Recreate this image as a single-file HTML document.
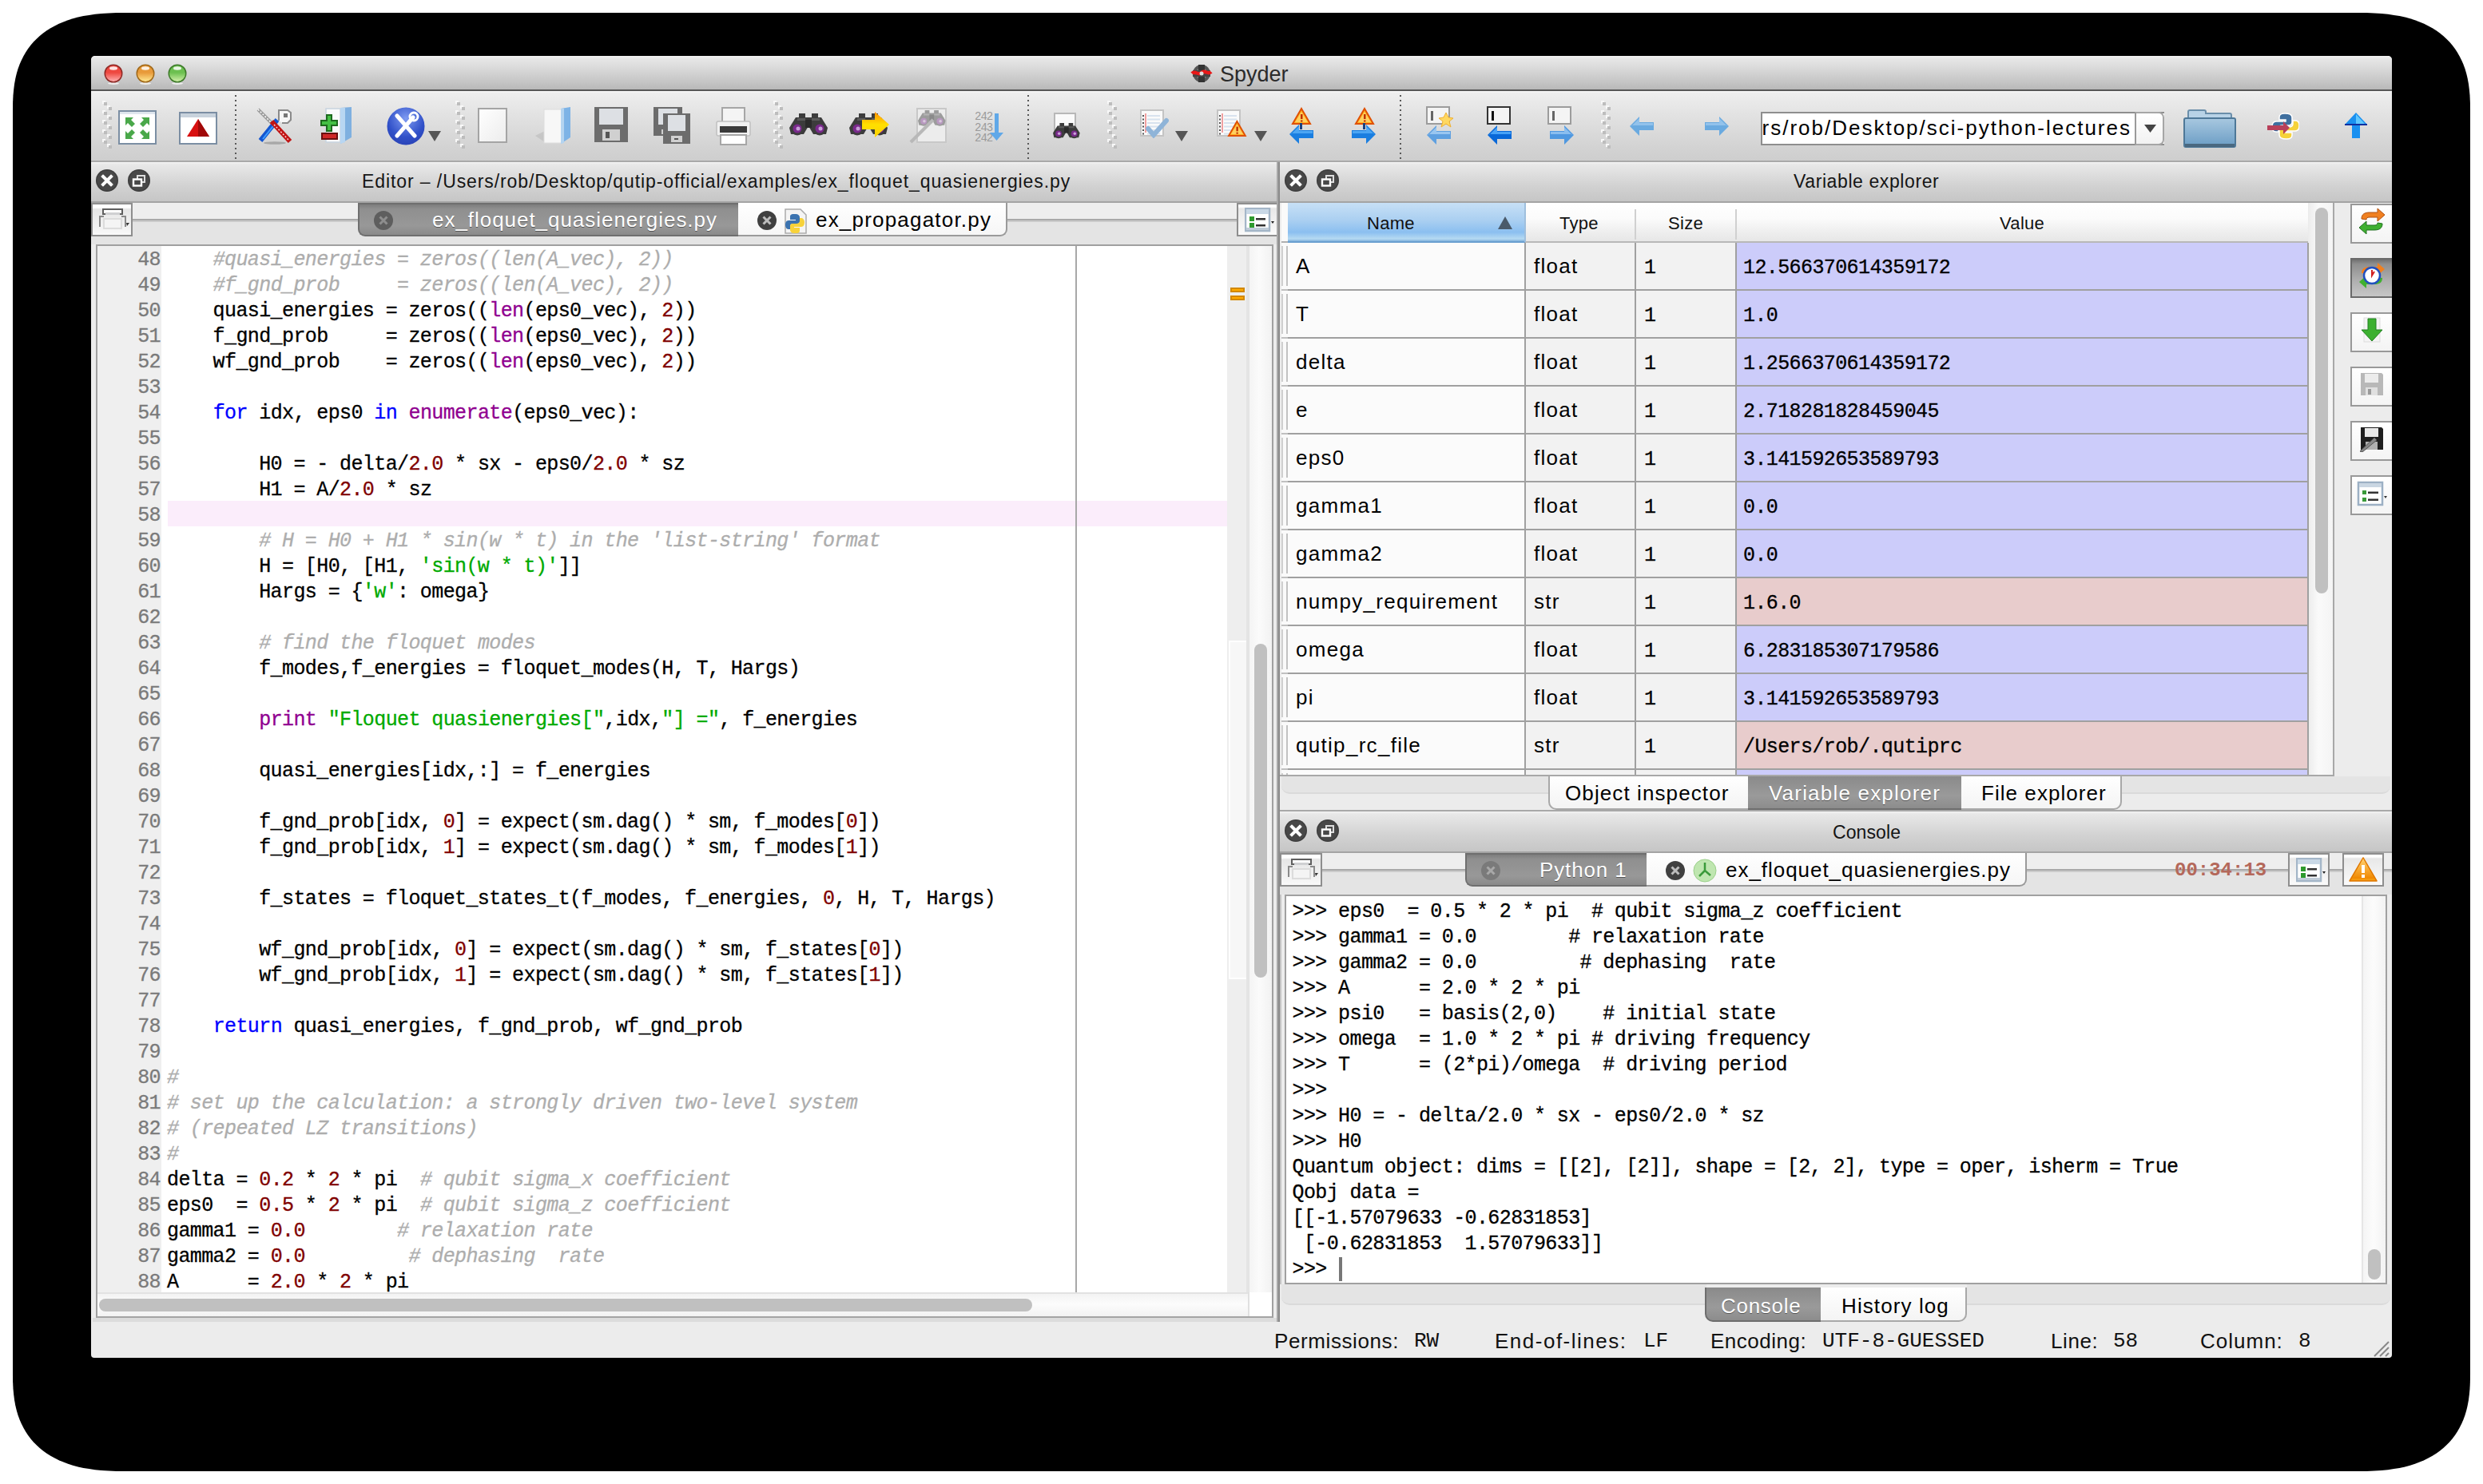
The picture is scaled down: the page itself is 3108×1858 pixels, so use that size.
<!DOCTYPE html><html><head><meta charset="utf-8"><style>html,body{margin:0;padding:0;width:3108px;height:1858px;overflow:hidden;background:#fff;}
*{box-sizing:border-box;}
body{font-family:"Liberation Sans",sans-serif;position:relative;color:#000;}
.a{position:absolute;}
.m{font-family:"Liberation Mono",monospace;font-size:25px;line-height:32px;letter-spacing:-0.6px;-webkit-text-stroke:0.3px currentColor;}
.ui{font-family:"Liberation Sans",sans-serif;font-size:26px;letter-spacing:1px;}
.hdr{background:linear-gradient(#f4f4f4 0,#e8e8e8 3px,#d2d2d2 60%,#c6c6c6);}
.cbx{position:absolute;width:28px;height:28px;border-radius:50%;background:radial-gradient(circle at 50% 40%,#5a5a5a,#333 75%);}
</style></head><body>
<svg class="a" style="left:0;top:0" width="3108" height="1858"><path d="M2948.0,16.0 L2962.2,16.1 L2972.1,16.5 L2980.9,17.0 L2989.0,17.8 L2996.5,18.9 L3003.6,20.1 L3010.4,21.6 L3016.8,23.3 L3022.9,25.3 L3028.7,27.4 L3034.3,29.8 L3039.6,32.4 L3044.7,35.2 L3049.5,38.3 L3054.0,41.5 L3058.3,45.0 L3062.3,48.7 L3066.1,52.6 L3069.7,56.8 L3072.9,61.1 L3076.0,65.7 L3078.7,70.5 L3081.2,75.5 L3083.5,80.8 L3085.5,86.3 L3087.2,92.1 L3088.7,98.2 L3089.9,104.7 L3090.8,111.7 L3091.5,119.2 L3091.9,127.8 L3092.0,140.0 L3092.0,1718.0 L3091.9,1730.2 L3091.5,1738.8 L3090.8,1746.3 L3089.9,1753.3 L3088.7,1759.8 L3087.2,1765.9 L3085.5,1771.7 L3083.5,1777.2 L3081.2,1782.5 L3078.7,1787.5 L3076.0,1792.3 L3072.9,1796.9 L3069.7,1801.2 L3066.1,1805.4 L3062.3,1809.3 L3058.3,1813.0 L3054.0,1816.5 L3049.5,1819.7 L3044.7,1822.8 L3039.6,1825.6 L3034.3,1828.2 L3028.7,1830.6 L3022.9,1832.7 L3016.8,1834.7 L3010.4,1836.4 L3003.6,1837.9 L2996.5,1839.1 L2989.0,1840.2 L2980.9,1841.0 L2972.1,1841.5 L2962.2,1841.9 L2948.0,1842.0 L160.0,1842.0 L145.8,1841.9 L135.9,1841.5 L127.1,1841.0 L119.0,1840.2 L111.5,1839.1 L104.4,1837.9 L97.6,1836.4 L91.2,1834.7 L85.1,1832.7 L79.3,1830.6 L73.7,1828.2 L68.4,1825.6 L63.3,1822.8 L58.5,1819.7 L54.0,1816.5 L49.7,1813.0 L45.7,1809.3 L41.9,1805.4 L38.3,1801.2 L35.1,1796.9 L32.0,1792.3 L29.3,1787.5 L26.8,1782.5 L24.5,1777.2 L22.5,1771.7 L20.8,1765.9 L19.3,1759.8 L18.1,1753.3 L17.2,1746.3 L16.5,1738.8 L16.1,1730.2 L16.0,1718.0 L16.0,140.0 L16.1,127.8 L16.5,119.2 L17.2,111.7 L18.1,104.7 L19.3,98.2 L20.8,92.1 L22.5,86.3 L24.5,80.8 L26.8,75.5 L29.3,70.5 L32.0,65.7 L35.1,61.1 L38.3,56.8 L41.9,52.6 L45.7,48.7 L49.7,45.0 L54.0,41.5 L58.5,38.3 L63.3,35.2 L68.4,32.4 L73.7,29.8 L79.3,27.4 L85.1,25.3 L91.2,23.3 L97.6,21.6 L104.4,20.1 L111.5,18.9 L119.0,17.8 L127.1,17.0 L135.9,16.5 L145.8,16.1 L160.0,16.0Z" fill="#000"/></svg>
<div class="a " style="left:114px;top:70px;width:2880px;height:1630px;background:#ececec;border-radius:5px 5px 4px 4px;"></div>
<div class="a " style="left:114px;top:70px;width:2880px;height:42px;background:linear-gradient(#f2f2f2 0,#e6e6e6 4px,#d8d8d8 40%,#c4c4c4 80%,#b8b8b8);border-radius:5px 5px 0 0;"></div>
<div class="a " style="left:114px;top:112px;width:2880px;height:2px;background:#575757;"></div>
<svg class="a" style="left:130px;top:80px" width="24" height="26"><defs><linearGradient id="tl0" x1="0" y1="0" x2="0" y2="1"><stop offset="0" stop-color="#ee4840"/><stop offset=".45" stop-color="#ee4840"/><stop offset="1" stop-color="#ffb0b0"/></linearGradient></defs><ellipse cx="12" cy="24.5" rx="7" ry="1.5" fill="#fff" opacity=".7"/><circle cx="12" cy="12" r="11.5" fill="#8e2a26"/><circle cx="12" cy="12" r="10" fill="url(#tl0)"/><ellipse cx="12" cy="5.5" rx="5" ry="2.2" fill="#fff" opacity=".85"/></svg>
<svg class="a" style="left:170px;top:80px" width="24" height="26"><defs><linearGradient id="tl1" x1="0" y1="0" x2="0" y2="1"><stop offset="0" stop-color="#e89a3a"/><stop offset=".45" stop-color="#e89a3a"/><stop offset="1" stop-color="#ffe890"/></linearGradient></defs><ellipse cx="12" cy="24.5" rx="7" ry="1.5" fill="#fff" opacity=".7"/><circle cx="12" cy="12" r="11.5" fill="#a06818"/><circle cx="12" cy="12" r="10" fill="url(#tl1)"/><ellipse cx="12" cy="5.5" rx="5" ry="2.2" fill="#fff" opacity=".85"/></svg>
<svg class="a" style="left:210px;top:80px" width="24" height="26"><defs><linearGradient id="tl2" x1="0" y1="0" x2="0" y2="1"><stop offset="0" stop-color="#6cc050"/><stop offset=".45" stop-color="#6cc050"/><stop offset="1" stop-color="#d0f0a8"/></linearGradient></defs><ellipse cx="12" cy="24.5" rx="7" ry="1.5" fill="#fff" opacity=".7"/><circle cx="12" cy="12" r="11.5" fill="#3e7a2a"/><circle cx="12" cy="12" r="10" fill="url(#tl2)"/><ellipse cx="12" cy="5.5" rx="5" ry="2.2" fill="#fff" opacity=".85"/></svg>
<svg class="a" style="left:1490px;top:79px" width="28" height="26"><circle cx="14" cy="13" r="11" fill="#555"/><circle cx="14" cy="13" r="7" fill="#888"/><rect x="10" y="2" width="8" height="22" fill="#333"/><rect x="3" y="9" width="22" height="8" fill="#444"/><path d="M2,13 C6,9 10,16 14,12 C18,8 22,15 26,11" stroke="#e81818" stroke-width="4.5" fill="none"/><circle cx="14" cy="13" r="2.5" fill="#ddd"/></svg>
<div class="a" style="left:1527px;top:77.6px;white-space:pre;font-size:27px;line-height:30.16px;letter-spacing:0px;color:#2b2b2b;">Spyder</div>
<div class="a " style="left:114px;top:114px;width:2880px;height:87px;background:linear-gradient(#efefef,#e2e2e2 35%,#d3d3d3 80%,#cecece);"></div>
<div class="a " style="left:114px;top:114px;width:2880px;height:2px;background:#f4f4f4;"></div>
<div class="a " style="left:114px;top:201px;width:2880px;height:2px;background:#a9a9a9;"></div>
<svg class="a" style="left:128px;top:118px" width="14" height="72" viewBox="0 0 14 72"><rect x="0" y="8" width="4" height="2" fill="#f8f8f8"/><rect x="0" y="10" width="2" height="2" fill="#f8f8f8"/><rect x="2" y="10" width="4" height="4" fill="#bdbdbd"/><rect x="6" y="14" width="4" height="2" fill="#f8f8f8"/><rect x="6" y="16" width="2" height="2" fill="#f8f8f8"/><rect x="8" y="16" width="4" height="4" fill="#bdbdbd"/><rect x="0" y="20" width="4" height="2" fill="#f8f8f8"/><rect x="0" y="22" width="2" height="2" fill="#f8f8f8"/><rect x="2" y="22" width="4" height="4" fill="#bdbdbd"/><rect x="6" y="26" width="4" height="2" fill="#f8f8f8"/><rect x="6" y="28" width="2" height="2" fill="#f8f8f8"/><rect x="8" y="28" width="4" height="4" fill="#bdbdbd"/><rect x="0" y="32" width="4" height="2" fill="#f8f8f8"/><rect x="0" y="34" width="2" height="2" fill="#f8f8f8"/><rect x="2" y="34" width="4" height="4" fill="#bdbdbd"/><rect x="6" y="38" width="4" height="2" fill="#f8f8f8"/><rect x="6" y="40" width="2" height="2" fill="#f8f8f8"/><rect x="8" y="40" width="4" height="4" fill="#bdbdbd"/><rect x="0" y="44" width="4" height="2" fill="#f8f8f8"/><rect x="0" y="46" width="2" height="2" fill="#f8f8f8"/><rect x="2" y="46" width="4" height="4" fill="#bdbdbd"/><rect x="6" y="50" width="4" height="2" fill="#f8f8f8"/><rect x="6" y="52" width="2" height="2" fill="#f8f8f8"/><rect x="8" y="52" width="4" height="4" fill="#bdbdbd"/><rect x="0" y="56" width="4" height="2" fill="#f8f8f8"/><rect x="0" y="58" width="2" height="2" fill="#f8f8f8"/><rect x="2" y="58" width="4" height="4" fill="#bdbdbd"/><rect x="6" y="62" width="4" height="2" fill="#f8f8f8"/><rect x="6" y="64" width="2" height="2" fill="#f8f8f8"/><rect x="8" y="64" width="4" height="4" fill="#bdbdbd"/></svg>
<svg class="a" style="left:148px;top:138px" width="48" height="43" viewBox="0 0 48 43"><rect x="1" y="1" width="46" height="41" fill="#fff" stroke="#7b8ea3" stroke-width="2"/><rect x="2" y="2" width="44" height="3" fill="#dfe6ee"/><g fill="#4aa84a"><path d="M9,9 H19 L16,12 L21,17 L17,21 L12,16 L9,19Z"/><path d="M39,9 H29 L32,12 L27,17 L31,21 L36,16 L39,19Z"/><path d="M9,36 H19 L16,33 L21,28 L17,24 L12,29 L9,26Z"/><path d="M39,36 H29 L32,33 L27,28 L31,24 L36,29 L39,26Z"/></g></svg>
<svg class="a" style="left:224px;top:140px" width="48" height="41" viewBox="0 0 48 41"><rect x="1" y="1" width="46" height="39" fill="#fff" stroke="#7b8ea3" stroke-width="2"/><rect x="2" y="2" width="44" height="5" fill="#c8d2dc"/><path d="M24,9 L38,31 H10Z" fill="#d81010"/><path d="M24,9 L38,31 H24Z" fill="#a00808"/></svg>
<svg class="a" style="left:294px;top:118px" width="2" height="84" viewBox="0 0 2 84"><rect x="0" y="1" width="2" height="2" fill="#585858"/><rect x="0" y="7" width="2" height="2" fill="#585858"/><rect x="0" y="13" width="2" height="2" fill="#585858"/><rect x="0" y="19" width="2" height="2" fill="#585858"/><rect x="0" y="25" width="2" height="2" fill="#585858"/><rect x="0" y="31" width="2" height="2" fill="#585858"/><rect x="0" y="37" width="2" height="2" fill="#585858"/><rect x="0" y="43" width="2" height="2" fill="#585858"/><rect x="0" y="49" width="2" height="2" fill="#585858"/><rect x="0" y="55" width="2" height="2" fill="#585858"/><rect x="0" y="61" width="2" height="2" fill="#585858"/><rect x="0" y="67" width="2" height="2" fill="#585858"/><rect x="0" y="73" width="2" height="2" fill="#585858"/><rect x="0" y="79" width="2" height="2" fill="#585858"/></svg>
<svg class="a" style="left:320px;top:134px" width="48" height="48" viewBox="0 0 48 48"><ellipse cx="24" cy="45" rx="14" ry="1.8" fill="#8a8a8a" opacity=".6"/><path d="M3,3 L20,20" stroke="#9a9a9a" stroke-width="4"/><path d="M3,3 L20,20" stroke="#fff" stroke-width="1.5" stroke-dasharray="2 2"/><path d="M27,16 L6,42" stroke="#1456d0" stroke-width="6"/><path d="M25,20 L9,40" stroke="#40a0ff" stroke-width="2"/><path d="M20,18 L43,43" stroke="#c01414" stroke-width="6"/><path d="M23,22 L41,41" stroke="#ffd0d0" stroke-width="1.5" stroke-dasharray="2 2"/><path d="M29,17 V4 H40 L44,7 V16 L40,20 H33" fill="#f6f6f6" stroke="#8a8a8a" stroke-width="2"/><path d="M35,8 H40 V13 H35Z" fill="#777"/></svg>
<svg class="a" style="left:400px;top:134px" width="42" height="48" viewBox="0 0 42 48"><path d="M8,2 H26 V44 H8Z" fill="#fbfbfb" stroke="#c8d4e0" stroke-width="1.5"/><path d="M26,1 L40,0 V38 L26,46Z" fill="#7fb0e0"/><path d="M26,1 L32,1 V44 L26,46Z" fill="#b8d6f2"/><path d="M9,10 H16 V3 H22 V10 H29 V16 H22 V23 H16 V16 H9Z" fill="#44c044" stroke="#1e6a1e" stroke-width="2" transform="translate(-7,7)"/><rect x="3" y="33" width="19" height="7" fill="#d02828" stroke="#6a1010" stroke-width="2"/></svg>
<svg class="a" style="left:484px;top:134px" width="48" height="48" viewBox="0 0 48 48"><defs><radialGradient id="bc" cx=".5" cy=".3" r=".7"><stop offset="0" stop-color="#7f9bf2"/><stop offset=".7" stop-color="#3050c8"/><stop offset="1" stop-color="#2a44b8"/></radialGradient></defs><circle cx="24" cy="24" r="23.5" fill="url(#bc)"/><path d="M13,11 L35,36 M13,36 L33,13" stroke="#fff" stroke-width="5" stroke-linecap="round"/><circle cx="34" cy="12" r="5" fill="none" stroke="#fff" stroke-width="3"/></svg>
<svg class="a" style="left:535px;top:162px" width="18" height="16" viewBox="0 0 18 16"><path d="M1,2 H17 L9,15Z" fill="#555"/></svg>
<svg class="a" style="left:570px;top:118px" width="14" height="72" viewBox="0 0 14 72"><rect x="0" y="8" width="4" height="2" fill="#f8f8f8"/><rect x="0" y="10" width="2" height="2" fill="#f8f8f8"/><rect x="2" y="10" width="4" height="4" fill="#bdbdbd"/><rect x="6" y="14" width="4" height="2" fill="#f8f8f8"/><rect x="6" y="16" width="2" height="2" fill="#f8f8f8"/><rect x="8" y="16" width="4" height="4" fill="#bdbdbd"/><rect x="0" y="20" width="4" height="2" fill="#f8f8f8"/><rect x="0" y="22" width="2" height="2" fill="#f8f8f8"/><rect x="2" y="22" width="4" height="4" fill="#bdbdbd"/><rect x="6" y="26" width="4" height="2" fill="#f8f8f8"/><rect x="6" y="28" width="2" height="2" fill="#f8f8f8"/><rect x="8" y="28" width="4" height="4" fill="#bdbdbd"/><rect x="0" y="32" width="4" height="2" fill="#f8f8f8"/><rect x="0" y="34" width="2" height="2" fill="#f8f8f8"/><rect x="2" y="34" width="4" height="4" fill="#bdbdbd"/><rect x="6" y="38" width="4" height="2" fill="#f8f8f8"/><rect x="6" y="40" width="2" height="2" fill="#f8f8f8"/><rect x="8" y="40" width="4" height="4" fill="#bdbdbd"/><rect x="0" y="44" width="4" height="2" fill="#f8f8f8"/><rect x="0" y="46" width="2" height="2" fill="#f8f8f8"/><rect x="2" y="46" width="4" height="4" fill="#bdbdbd"/><rect x="6" y="50" width="4" height="2" fill="#f8f8f8"/><rect x="6" y="52" width="2" height="2" fill="#f8f8f8"/><rect x="8" y="52" width="4" height="4" fill="#bdbdbd"/><rect x="0" y="56" width="4" height="2" fill="#f8f8f8"/><rect x="0" y="58" width="2" height="2" fill="#f8f8f8"/><rect x="2" y="58" width="4" height="4" fill="#bdbdbd"/><rect x="6" y="62" width="4" height="2" fill="#f8f8f8"/><rect x="6" y="64" width="2" height="2" fill="#f8f8f8"/><rect x="8" y="64" width="4" height="4" fill="#bdbdbd"/></svg>
<svg class="a" style="left:598px;top:135px" width="37" height="44" viewBox="0 0 37 44"><defs><linearGradient id="nf" x1="0" y1="0" x2="1" y2="1"><stop offset="0" stop-color="#fff"/><stop offset="1" stop-color="#ececec"/></linearGradient></defs><rect x="1" y="1" width="35" height="42" fill="url(#nf)" stroke="#a4a4a4" stroke-width="2"/></svg>
<svg class="a" style="left:664px;top:134px" width="52" height="48" viewBox="0 0 52 48"><path d="M6,36 L18,44 V30Z" fill="#bbb" opacity=".6"/><rect x="17" y="3" width="22" height="42" fill="#f7f7f7" stroke="#ddd" stroke-width="1"/><path d="M38,2 L50,0 V38 L38,46Z" fill="#7db3e6"/><path d="M38,2 L42,2 V45 L38,46Z" fill="#b4d4f0"/></svg>
<svg class="a" style="left:744px;top:134px" width="42" height="44" viewBox="0 0 42 44"><g transform="translate(0,0)"><path d="M0,0 H42 V44 H0Z" fill="#6c6c6c"/><rect x="6" y="2" width="30" height="20" fill="#dde0e4"/><rect x="10" y="28" width="22" height="14" fill="#d0d0d0"/><rect x="14" y="31" width="5" height="8" fill="#555"/></g></svg>
<svg class="a" style="left:818px;top:134px" width="48" height="46" viewBox="0 0 48 46"><g transform="translate(0,0)"><path d="M0,0 H36 V36 H0Z" fill="#6c6c6c"/><rect x="6" y="2" width="24" height="20" fill="#dde0e4"/><rect x="10" y="28" width="16" height="6" fill="#d0d0d0"/><rect x="14" y="31" width="5" height="0" fill="#555"/></g><g transform="translate(12,8)"><path d="M0,0 H34 V38 H0Z" fill="#6c6c6c"/><rect x="6" y="2" width="22" height="20" fill="#dde0e4"/><rect x="10" y="28" width="14" height="8" fill="#d0d0d0"/><rect x="14" y="31" width="5" height="2" fill="#555"/></g></svg>
<svg class="a" style="left:896px;top:134px" width="44" height="48" viewBox="0 0 44 48"><rect x="8" y="1" width="28" height="22" fill="#f4f4f4" stroke="#a6a6a6" stroke-width="2"/><rect x="1" y="18" width="42" height="18" rx="2" fill="#f0f0f0" stroke="#c0c0c0" stroke-width="1.5"/><rect x="5" y="24" width="34" height="8" fill="#3a3a3a"/><rect x="6" y="35" width="32" height="12" fill="#fff" stroke="#a6a6a6" stroke-width="2"/></svg>
<svg class="a" style="left:968px;top:118px" width="14" height="72" viewBox="0 0 14 72"><rect x="0" y="8" width="4" height="2" fill="#f8f8f8"/><rect x="0" y="10" width="2" height="2" fill="#f8f8f8"/><rect x="2" y="10" width="4" height="4" fill="#bdbdbd"/><rect x="6" y="14" width="4" height="2" fill="#f8f8f8"/><rect x="6" y="16" width="2" height="2" fill="#f8f8f8"/><rect x="8" y="16" width="4" height="4" fill="#bdbdbd"/><rect x="0" y="20" width="4" height="2" fill="#f8f8f8"/><rect x="0" y="22" width="2" height="2" fill="#f8f8f8"/><rect x="2" y="22" width="4" height="4" fill="#bdbdbd"/><rect x="6" y="26" width="4" height="2" fill="#f8f8f8"/><rect x="6" y="28" width="2" height="2" fill="#f8f8f8"/><rect x="8" y="28" width="4" height="4" fill="#bdbdbd"/><rect x="0" y="32" width="4" height="2" fill="#f8f8f8"/><rect x="0" y="34" width="2" height="2" fill="#f8f8f8"/><rect x="2" y="34" width="4" height="4" fill="#bdbdbd"/><rect x="6" y="38" width="4" height="2" fill="#f8f8f8"/><rect x="6" y="40" width="2" height="2" fill="#f8f8f8"/><rect x="8" y="40" width="4" height="4" fill="#bdbdbd"/><rect x="0" y="44" width="4" height="2" fill="#f8f8f8"/><rect x="0" y="46" width="2" height="2" fill="#f8f8f8"/><rect x="2" y="46" width="4" height="4" fill="#bdbdbd"/><rect x="6" y="50" width="4" height="2" fill="#f8f8f8"/><rect x="6" y="52" width="2" height="2" fill="#f8f8f8"/><rect x="8" y="52" width="4" height="4" fill="#bdbdbd"/><rect x="0" y="56" width="4" height="2" fill="#f8f8f8"/><rect x="0" y="58" width="2" height="2" fill="#f8f8f8"/><rect x="2" y="58" width="4" height="4" fill="#bdbdbd"/><rect x="6" y="62" width="4" height="2" fill="#f8f8f8"/><rect x="6" y="64" width="2" height="2" fill="#f8f8f8"/><rect x="8" y="64" width="4" height="4" fill="#bdbdbd"/></svg>
<svg class="a" style="left:988px;top:140px" width="48" height="34" viewBox="0 0 48 34"><g transform="translate(0,2) scale(1)"><rect x="12" y="0" width="8" height="6" fill="#3c3c3c"/><rect x="28" y="0" width="8" height="6" fill="#3c3c3c"/><path d="M8,5 H24 L25,14 L18,26 H2 L0,18Z" fill="#3c3c3c"/><path d="M24,5 H40 L48,18 L46,26 H30 L23,14Z" fill="#3c3c3c"/><rect x="10" y="6" width="10" height="3" fill="#5a5a5a"/><rect x="28" y="6" width="10" height="3" fill="#5a5a5a"/><rect x="20" y="8" width="8" height="10" fill="#2a2a2a"/><circle cx="10" cy="19" r="8.5" fill="#3c3c3c"/><circle cx="38" cy="19" r="8.5" fill="#3c3c3c"/><circle cx="10" cy="19" r="5.5" fill="#7a2a8c"/><circle cx="38" cy="19" r="5.5" fill="#7a2a8c"/><circle cx="11" cy="19" r="2.5" fill="#c8a0d8"/><circle cx="39" cy="19" r="2.5" fill="#c8a0d8"/></g></svg>
<svg class="a" style="left:1063px;top:138px" width="50" height="36" viewBox="0 0 50 36"><defs><linearGradient id="ya" x1="0" y1="0" x2="0" y2="1"><stop offset="0" stop-color="#ff8c00"/><stop offset=".5" stop-color="#ffe000"/><stop offset="1" stop-color="#ffd000"/></linearGradient></defs><g transform="translate(0,4) scale(1)"><rect x="12" y="0" width="8" height="6" fill="#3c3c3c"/><rect x="28" y="0" width="8" height="6" fill="#3c3c3c"/><path d="M8,5 H24 L25,14 L18,26 H2 L0,18Z" fill="#3c3c3c"/><path d="M24,5 H40 L48,18 L46,26 H30 L23,14Z" fill="#3c3c3c"/><rect x="10" y="6" width="10" height="3" fill="#5a5a5a"/><rect x="28" y="6" width="10" height="3" fill="#5a5a5a"/><rect x="20" y="8" width="8" height="10" fill="#2a2a2a"/><circle cx="10" cy="19" r="8.5" fill="#3c3c3c"/><circle cx="38" cy="19" r="8.5" fill="#3c3c3c"/><circle cx="10" cy="19" r="5.5" fill="#7a2a8c"/><circle cx="38" cy="19" r="5.5" fill="#7a2a8c"/><circle cx="11" cy="19" r="2.5" fill="#c8a0d8"/><circle cx="39" cy="19" r="2.5" fill="#c8a0d8"/></g><path d="M16,12 H32 V2 L50,18 L32,34 V24 H16Z" fill="url(#ya)"/></svg>
<svg class="a" style="left:1138px;top:134px" width="48" height="46" viewBox="0 0 48 46"><rect x="10" y="2" width="36" height="42" fill="#ececec" stroke="#c8c8c8" stroke-width="2"/><g transform="translate(11,4) scale(0.72)"><rect x="12" y="0" width="8" height="6" fill="#9c9c9c"/><rect x="28" y="0" width="8" height="6" fill="#9c9c9c"/><path d="M8,5 H24 L25,14 L18,26 H2 L0,18Z" fill="#9c9c9c"/><path d="M24,5 H40 L48,18 L46,26 H30 L23,14Z" fill="#9c9c9c"/><rect x="10" y="6" width="10" height="3" fill="#b4b4b4"/><rect x="28" y="6" width="10" height="3" fill="#b4b4b4"/><rect x="20" y="8" width="8" height="10" fill="#8a8a8a"/><circle cx="10" cy="19" r="8.5" fill="#9c9c9c"/><circle cx="38" cy="19" r="8.5" fill="#9c9c9c"/><circle cx="10" cy="19" r="5.5" fill="#b898c0"/><circle cx="38" cy="19" r="5.5" fill="#b898c0"/><circle cx="11" cy="19" r="2.5" fill="#d8c8dc"/><circle cx="39" cy="19" r="2.5" fill="#d8c8dc"/></g><path d="M2,44 L30,16" stroke="#b8b8b8" stroke-width="4"/></svg>
<svg class="a" style="left:1220px;top:138px" width="40" height="40" viewBox="0 0 40 40"><text x="0" y="12" font-family="Liberation Mono" font-size="14" letter-spacing="-1" fill="#9a9a9a">242</text><text x="0" y="26" font-family="Liberation Mono" font-size="14" letter-spacing="-1" fill="#9a9a9a">243</text><text x="0" y="39" font-family="Liberation Mono" font-size="14" letter-spacing="-1" fill="#9a9a9a">242</text><path d="M25,4 H30 V28 H36 L27.5,38 L19,28 H25Z" fill="#60a8e8"/></svg>
<svg class="a" style="left:1286px;top:118px" width="2" height="84" viewBox="0 0 2 84"><rect x="0" y="1" width="2" height="2" fill="#585858"/><rect x="0" y="7" width="2" height="2" fill="#585858"/><rect x="0" y="13" width="2" height="2" fill="#585858"/><rect x="0" y="19" width="2" height="2" fill="#585858"/><rect x="0" y="25" width="2" height="2" fill="#585858"/><rect x="0" y="31" width="2" height="2" fill="#585858"/><rect x="0" y="37" width="2" height="2" fill="#585858"/><rect x="0" y="43" width="2" height="2" fill="#585858"/><rect x="0" y="49" width="2" height="2" fill="#585858"/><rect x="0" y="55" width="2" height="2" fill="#585858"/><rect x="0" y="61" width="2" height="2" fill="#585858"/><rect x="0" y="67" width="2" height="2" fill="#585858"/><rect x="0" y="73" width="2" height="2" fill="#585858"/><rect x="0" y="79" width="2" height="2" fill="#585858"/></svg>
<svg class="a" style="left:1318px;top:140px" width="36" height="36" viewBox="0 0 36 36"><rect x="2" y="2" width="26" height="22" fill="#fafafa" stroke="#b8b8b8" stroke-width="2"/><g transform="translate(0,14) scale(0.7)"><rect x="12" y="0" width="8" height="6" fill="#3c3c3c"/><rect x="28" y="0" width="8" height="6" fill="#3c3c3c"/><path d="M8,5 H24 L25,14 L18,26 H2 L0,18Z" fill="#3c3c3c"/><path d="M24,5 H40 L48,18 L46,26 H30 L23,14Z" fill="#3c3c3c"/><rect x="10" y="6" width="10" height="3" fill="#5a5a5a"/><rect x="28" y="6" width="10" height="3" fill="#5a5a5a"/><rect x="20" y="8" width="8" height="10" fill="#2a2a2a"/><circle cx="10" cy="19" r="8.5" fill="#3c3c3c"/><circle cx="38" cy="19" r="8.5" fill="#3c3c3c"/><circle cx="10" cy="19" r="5.5" fill="#7a2a8c"/><circle cx="38" cy="19" r="5.5" fill="#7a2a8c"/><circle cx="11" cy="19" r="2.5" fill="#c8a0d8"/><circle cx="39" cy="19" r="2.5" fill="#c8a0d8"/></g></svg>
<svg class="a" style="left:1386px;top:118px" width="14" height="72" viewBox="0 0 14 72"><rect x="0" y="8" width="4" height="2" fill="#f8f8f8"/><rect x="0" y="10" width="2" height="2" fill="#f8f8f8"/><rect x="2" y="10" width="4" height="4" fill="#bdbdbd"/><rect x="6" y="14" width="4" height="2" fill="#f8f8f8"/><rect x="6" y="16" width="2" height="2" fill="#f8f8f8"/><rect x="8" y="16" width="4" height="4" fill="#bdbdbd"/><rect x="0" y="20" width="4" height="2" fill="#f8f8f8"/><rect x="0" y="22" width="2" height="2" fill="#f8f8f8"/><rect x="2" y="22" width="4" height="4" fill="#bdbdbd"/><rect x="6" y="26" width="4" height="2" fill="#f8f8f8"/><rect x="6" y="28" width="2" height="2" fill="#f8f8f8"/><rect x="8" y="28" width="4" height="4" fill="#bdbdbd"/><rect x="0" y="32" width="4" height="2" fill="#f8f8f8"/><rect x="0" y="34" width="2" height="2" fill="#f8f8f8"/><rect x="2" y="34" width="4" height="4" fill="#bdbdbd"/><rect x="6" y="38" width="4" height="2" fill="#f8f8f8"/><rect x="6" y="40" width="2" height="2" fill="#f8f8f8"/><rect x="8" y="40" width="4" height="4" fill="#bdbdbd"/><rect x="0" y="44" width="4" height="2" fill="#f8f8f8"/><rect x="0" y="46" width="2" height="2" fill="#f8f8f8"/><rect x="2" y="46" width="4" height="4" fill="#bdbdbd"/><rect x="6" y="50" width="4" height="2" fill="#f8f8f8"/><rect x="6" y="52" width="2" height="2" fill="#f8f8f8"/><rect x="8" y="52" width="4" height="4" fill="#bdbdbd"/><rect x="0" y="56" width="4" height="2" fill="#f8f8f8"/><rect x="0" y="58" width="2" height="2" fill="#f8f8f8"/><rect x="2" y="58" width="4" height="4" fill="#bdbdbd"/><rect x="6" y="62" width="4" height="2" fill="#f8f8f8"/><rect x="6" y="64" width="2" height="2" fill="#f8f8f8"/><rect x="8" y="64" width="4" height="4" fill="#bdbdbd"/></svg>
<svg class="a" style="left:1427px;top:137px" width="36" height="36" viewBox="0 0 36 36"><g transform="translate(1,1)"><rect x="0" y="0" width="28" height="32" fill="#fafafa" stroke="#c4c4c4" stroke-width="2"/><rect x="5" y="4" width="2" height="24" fill="#f0a0a0"/><rect x="8" y="6.0" width="16" height="2" fill="#d8e2ee"/><rect x="2" y="6.0" width="2" height="2" fill="#555"/><rect x="8" y="10.5" width="16" height="2" fill="#d8e2ee"/><rect x="2" y="10.5" width="2" height="2" fill="#555"/><rect x="8" y="15.0" width="16" height="2" fill="#d8e2ee"/><rect x="2" y="15.0" width="2" height="2" fill="#555"/><rect x="8" y="19.5" width="16" height="2" fill="#d8e2ee"/><rect x="2" y="19.5" width="2" height="2" fill="#555"/><rect x="8" y="24.0" width="16" height="2" fill="#d8e2ee"/><rect x="2" y="24.0" width="2" height="2" fill="#555"/><rect x="8" y="28.5" width="16" height="2" fill="#d8e2ee"/><rect x="2" y="28.5" width="2" height="2" fill="#555"/></g><path d="M10,24 L17,32 L33,14" stroke="#8fb4d8" stroke-width="6" fill="none" stroke-linecap="round"/></svg>
<svg class="a" style="left:1470px;top:162px" width="18" height="16" viewBox="0 0 18 16"><path d="M1,2 H17 L9,15Z" fill="#555"/></svg>
<svg class="a" style="left:1523px;top:137px" width="40" height="36" viewBox="0 0 40 36"><g transform="translate(1,1)"><rect x="0" y="0" width="28" height="32" fill="#fafafa" stroke="#c4c4c4" stroke-width="2"/><rect x="5" y="4" width="2" height="24" fill="#f0a0a0"/><rect x="8" y="6.0" width="16" height="2" fill="#d8e2ee"/><rect x="2" y="6.0" width="2" height="2" fill="#555"/><rect x="8" y="10.5" width="16" height="2" fill="#d8e2ee"/><rect x="2" y="10.5" width="2" height="2" fill="#555"/><rect x="8" y="15.0" width="16" height="2" fill="#d8e2ee"/><rect x="2" y="15.0" width="2" height="2" fill="#555"/><rect x="8" y="19.5" width="16" height="2" fill="#d8e2ee"/><rect x="2" y="19.5" width="2" height="2" fill="#555"/><rect x="8" y="24.0" width="16" height="2" fill="#d8e2ee"/><rect x="2" y="24.0" width="2" height="2" fill="#555"/><rect x="8" y="28.5" width="16" height="2" fill="#d8e2ee"/><rect x="2" y="28.5" width="2" height="2" fill="#555"/></g><g transform="translate(14,14) scale(0.95)"><path d="M12,1 L23,20 H1Z" fill="#ffb020" stroke="#e05000" stroke-width="2" stroke-linejoin="miter"/><path d="M12,5 L20,18 H4Z" fill="#ffd060"/><rect x="11" y="8" width="2.5" height="6" fill="#c03000"/><rect x="11" y="15.5" width="2.5" height="2" fill="#c03000"/></g></svg>
<svg class="a" style="left:1569px;top:162px" width="18" height="16" viewBox="0 0 18 16"><path d="M1,2 H17 L9,15Z" fill="#555"/></svg>
<svg class="a" style="left:1612px;top:134px" width="34" height="48" viewBox="0 0 34 48"><g transform="translate(5,1) scale(1)"><path d="M12,1 L23,20 H1Z" fill="#ffb020" stroke="#e05000" stroke-width="2" stroke-linejoin="miter"/><path d="M12,5 L20,18 H4Z" fill="#ffd060"/><rect x="11" y="8" width="2.5" height="6" fill="#c03000"/><rect x="11" y="15.5" width="2.5" height="2" fill="#c03000"/></g><rect x="15" y="20" width="3" height="8" fill="#1a4080"/><g transform="translate(2,22)"><path d="M0,12 L12,0 V7 H30 V17 H12 V24Z" fill="#1a7ee0"/><path d="M2,12 L12,2 V8 H29 V11 H2Z" fill="#5ab0f8" opacity=".8"/></g></svg>
<svg class="a" style="left:1690px;top:134px" width="34" height="48" viewBox="0 0 34 48"><g transform="translate(6,1) scale(1)"><path d="M12,1 L23,20 H1Z" fill="#ffb020" stroke="#e05000" stroke-width="2" stroke-linejoin="miter"/><path d="M12,5 L20,18 H4Z" fill="#ffd060"/><rect x="11" y="8" width="2.5" height="6" fill="#c03000"/><rect x="11" y="15.5" width="2.5" height="2" fill="#c03000"/></g><rect x="16" y="20" width="3" height="8" fill="#1a4080"/><g transform="translate(2,22)"><path d="M30,12 L18,0 V7 H0 V17 H18 V24Z" fill="#1a7ee0"/><path d="M28,12 L18,2 V8 H1 V11 H28Z" fill="#5ab0f8" opacity=".8"/></g></svg>
<svg class="a" style="left:1752px;top:118px" width="2" height="84" viewBox="0 0 2 84"><rect x="0" y="1" width="2" height="2" fill="#585858"/><rect x="0" y="7" width="2" height="2" fill="#585858"/><rect x="0" y="13" width="2" height="2" fill="#585858"/><rect x="0" y="19" width="2" height="2" fill="#585858"/><rect x="0" y="25" width="2" height="2" fill="#585858"/><rect x="0" y="31" width="2" height="2" fill="#585858"/><rect x="0" y="37" width="2" height="2" fill="#585858"/><rect x="0" y="43" width="2" height="2" fill="#585858"/><rect x="0" y="49" width="2" height="2" fill="#585858"/><rect x="0" y="55" width="2" height="2" fill="#585858"/><rect x="0" y="61" width="2" height="2" fill="#585858"/><rect x="0" y="67" width="2" height="2" fill="#585858"/><rect x="0" y="73" width="2" height="2" fill="#585858"/><rect x="0" y="79" width="2" height="2" fill="#585858"/></svg>
<svg class="a" style="left:1785px;top:133px" width="38" height="48" viewBox="0 0 38 48"><g transform="translate(0,0)"><rect x="1" y="1" width="28" height="21" fill="#f4f4f4" stroke="#9c9c9c" stroke-width="2"/><rect x="6" y="6" width="3" height="12" fill="#666"/></g><path d="M25,8 L28,14 L34,15 L29,19 L31,26 L25,22 L19,26 L21,19 L16,15 L22,14Z" fill="#ffd860" stroke="#f0b030" stroke-width="1"/><g transform="translate(1,24)"><path d="M0,12 L12,0 V7 H30 V17 H12 V24Z" fill="#5fa0e0"/><path d="M2,12 L12,2 V8 H29 V11 H2Z" fill="#a8d0f4" opacity=".8"/></g></svg>
<svg class="a" style="left:1861px;top:133px" width="34" height="48" viewBox="0 0 34 48"><g transform="translate(0,0)"><rect x="1" y="1" width="28" height="21" fill="#f4f4f4" stroke="#333" stroke-width="2"/><rect x="6" y="6" width="3" height="12" fill="#111"/></g><g transform="translate(1,24)"><path d="M0,12 L12,0 V7 H30 V17 H12 V24Z" fill="#0868d8"/><path d="M2,12 L12,2 V8 H29 V11 H2Z" fill="#58b0ff" opacity=".8"/></g></svg>
<svg class="a" style="left:1937px;top:133px" width="34" height="48" viewBox="0 0 34 48"><g transform="translate(0,0)"><rect x="1" y="1" width="28" height="21" fill="#f4f4f4" stroke="#9c9c9c" stroke-width="2"/><rect x="6" y="6" width="3" height="12" fill="#666"/></g><g transform="translate(3,24)"><path d="M30,12 L18,0 V7 H0 V17 H18 V24Z" fill="#4f98e0"/><path d="M28,12 L18,2 V8 H1 V11 H28Z" fill="#98c8f2" opacity=".8"/></g></svg>
<svg class="a" style="left:2004px;top:118px" width="14" height="72" viewBox="0 0 14 72"><rect x="0" y="8" width="4" height="2" fill="#f8f8f8"/><rect x="0" y="10" width="2" height="2" fill="#f8f8f8"/><rect x="2" y="10" width="4" height="4" fill="#bdbdbd"/><rect x="6" y="14" width="4" height="2" fill="#f8f8f8"/><rect x="6" y="16" width="2" height="2" fill="#f8f8f8"/><rect x="8" y="16" width="4" height="4" fill="#bdbdbd"/><rect x="0" y="20" width="4" height="2" fill="#f8f8f8"/><rect x="0" y="22" width="2" height="2" fill="#f8f8f8"/><rect x="2" y="22" width="4" height="4" fill="#bdbdbd"/><rect x="6" y="26" width="4" height="2" fill="#f8f8f8"/><rect x="6" y="28" width="2" height="2" fill="#f8f8f8"/><rect x="8" y="28" width="4" height="4" fill="#bdbdbd"/><rect x="0" y="32" width="4" height="2" fill="#f8f8f8"/><rect x="0" y="34" width="2" height="2" fill="#f8f8f8"/><rect x="2" y="34" width="4" height="4" fill="#bdbdbd"/><rect x="6" y="38" width="4" height="2" fill="#f8f8f8"/><rect x="6" y="40" width="2" height="2" fill="#f8f8f8"/><rect x="8" y="40" width="4" height="4" fill="#bdbdbd"/><rect x="0" y="44" width="4" height="2" fill="#f8f8f8"/><rect x="0" y="46" width="2" height="2" fill="#f8f8f8"/><rect x="2" y="46" width="4" height="4" fill="#bdbdbd"/><rect x="6" y="50" width="4" height="2" fill="#f8f8f8"/><rect x="6" y="52" width="2" height="2" fill="#f8f8f8"/><rect x="8" y="52" width="4" height="4" fill="#bdbdbd"/><rect x="0" y="56" width="4" height="2" fill="#f8f8f8"/><rect x="0" y="58" width="2" height="2" fill="#f8f8f8"/><rect x="2" y="58" width="4" height="4" fill="#bdbdbd"/><rect x="6" y="62" width="4" height="2" fill="#f8f8f8"/><rect x="6" y="64" width="2" height="2" fill="#f8f8f8"/><rect x="8" y="64" width="4" height="4" fill="#bdbdbd"/></svg>
<svg class="a" style="left:2039px;top:142px" width="32" height="32" viewBox="0 0 32 32"><g transform="translate(1,4)"><path d="M0,12 L12,0 V7 H30 V17 H12 V24Z" fill="#6aaae0"/><path d="M2,12 L12,2 V8 H29 V11 H2Z" fill="#9cc8ee" opacity=".8"/></g></svg>
<svg class="a" style="left:2133px;top:142px" width="32" height="32" viewBox="0 0 32 32"><g transform="translate(1,4)"><path d="M30,12 L18,0 V7 H0 V17 H18 V24Z" fill="#6aaae0"/><path d="M28,12 L18,2 V8 H1 V11 H28Z" fill="#9cc8ee" opacity=".8"/></g></svg>
<div class="a " style="left:2204px;top:140px;width:505px;height:42px;background:#fff;border:2px solid #8e8e8e;border-right:none;"></div>
<div class="a" style="left:2206px;top:142px;width:466px;height:38px;overflow:hidden;"><div class="a" style="right:4px;top:4.3px;white-space:nowrap;font-size:26px;line-height:29px;letter-spacing:2px;color:#000;">/Users/rob/Desktop/sci-python-lectures</div></div>
<div class="a " style="left:2672px;top:140px;width:37px;height:42px;background:linear-gradient(#fff,#f2f2f2);border:2px solid #a6a6a6;border-left:2px solid #9a9a9a;border-radius:0 7px 7px 0;"></div>
<svg class="a" style="left:2684px;top:156px" width="15" height="11" viewBox="0 0 15 11"><path d="M0,0 H15 L7.5,10Z" fill="#444"/></svg>
<svg class="a" style="left:2733px;top:136px" width="66" height="50" viewBox="0 0 66 50"><defs><linearGradient id="fd" x1="0" y1="0" x2="0" y2="1"><stop offset="0" stop-color="#a8c8e0"/><stop offset="1" stop-color="#6a9cc4"/></linearGradient></defs><path d="M6,12 V4 Q6,2 8,2 H26 Q28,2 28,4 V6 H58 Q60,6 60,8 V14Z" fill="#b8d2e6" stroke="#6a8eaa" stroke-width="2"/><rect x="1" y="12" width="64" height="36" rx="2" fill="url(#fd)" stroke="#4e7898" stroke-width="2"/><rect x="2" y="44" width="62" height="4" fill="#4a6880"/></svg>
<svg class="a" style="left:2838px;top:140px" width="40" height="36" viewBox="0 0 40 36"><path d="M22,2 C16,2 15,4 15,7 V10 H23 V12 H11 C7,12 6,15 6,19 C6,23 8,25 11,25 H14 V21 C14,18 16,17 19,17 H27 C29,17 31,15 31,13 V7 C31,4 28,2 22,2Z" fill="#3f6f9f" stroke="#fff" stroke-width="1.5"/><path d="M24,34 C30,34 31,32 31,29 V26 H23 V24 H35 C39,24 40,21 40,17 C40,13 38,11 35,11 H32 V15 C32,18 30,19 27,19 H19 C17,19 15,21 15,23 V29 C15,32 18,34 24,34Z" fill="#f5d23a" stroke="#fff" stroke-width="1.5"/><path d="M0,17 H20 V12 L28,20 L20,28 V23 H0Z" fill="#b8405a"/></svg>
<svg class="a" style="left:2934px;top:140px" width="30" height="34" viewBox="0 0 30 34"><path d="M15,1 L29,16 H20 V33 H10 V16 H1Z" fill="#1a90f0"/><path d="M15,3 L26,15 H15Z" fill="#60c8ff"/><rect x="1" y="15" width="28" height="2" fill="#1030a0"/></svg>
<div class="a hdr" style="left:114px;top:203px;width:1486px;height:49px;"></div>
<div class="a " style="left:114px;top:252px;width:1486px;height:2px;background:#a4a4a4;"></div>
<svg class="a" style="left:120px;top:212px" width="28" height="28"><circle cx="14" cy="14" r="14" fill="#3e3e3e"/><circle cx="14" cy="14" r="12.5" fill="#484848"/><path d="M9,9 L19,19 M19,9 L9,19" stroke="#fff" stroke-width="4" stroke-linecap="square"/></svg>
<svg class="a" style="left:160px;top:212px" width="28" height="28"><circle cx="14" cy="14" r="14" fill="#3e3e3e"/><circle cx="14" cy="14" r="12.5" fill="#484848"/><rect x="12" y="8" width="9" height="8" fill="none" stroke="#ddd" stroke-width="2"/><rect x="7" y="12.5" width="10" height="8" fill="#484848" stroke="#fff" stroke-width="2.4"/></svg>
<div class="a" style="left:453px;top:215.2px;white-space:pre;font-size:23px;line-height:25.69px;letter-spacing:0.91px;color:#151515;">Editor – /Users/rob/Desktop/qutip-official/examples/ex_floquet_quasienergies.py</div>
<div class="a " style="left:114px;top:254px;width:1486px;height:20px;background:#eeeeee;"></div>
<div class="a " style="left:114px;top:274px;width:1484px;height:2px;background:#a9a9a9;"></div>
<div class="a " style="left:114px;top:276px;width:1484px;height:2px;background:#cbcbcb;"></div>
<div class="a " style="left:114px;top:278px;width:1484px;height:28px;background:#e4e4e4;"></div>
<div class="a " style="left:114px;top:254px;width:52px;height:42px;background:linear-gradient(#fff 0,#fff 4px,#e6e6e6 6px,#f6f6f6 90%,#fafafa);border:2px solid #8e8e8e;"></div>
<svg class="a" style="left:114px;top:254px" width="52" height="42"><rect x="15" y="8" width="24" height="6" fill="#fff" stroke="#5e5e5e" stroke-width="2"/><rect x="18" y="12" width="18" height="3" fill="#cfd0d2"/><path d="M11,30 V17 H16 M38,17 H43 V30" fill="none" stroke="#8a8a8a" stroke-width="2"/><rect x="16" y="20" width="22" height="12" fill="#f4f4f4" stroke="#dcdcdc" stroke-width="2"/><path d="M44,25 H48 L45,29Z" fill="#333"/></svg>
<div class="a " style="left:1548px;top:254px;width:52px;height:42px;background:linear-gradient(#fff 0,#fff 3px,#e8e8e8 5px,#f6f6f6 80%,#fafafa);border:2px solid #8e8e8e;"></div>
<svg class="a" style="left:1558px;top:260px" width="38" height="31"><rect x="1" y="1" width="30" height="28" fill="#fff" stroke="#a4b6c8" stroke-width="2.5"/><rect x="2" y="2" width="28" height="6" fill="#c9d8e6"/><rect x="2" y="25" width="28" height="3" fill="#c0ccd8"/><rect x="6" y="11" width="6" height="6" fill="#2e9a2e"/><rect x="6" y="19" width="6" height="6" fill="#2e9a2e"/><rect x="14" y="13" width="12" height="2.5" fill="#333"/><rect x="14" y="21" width="12" height="2.5" fill="#333"/><path d="M33,17 L37,17 L35,20Z" fill="#222"/></svg>
<div class="a " style="left:448px;top:254px;width:476px;height:42px;background:linear-gradient(#7d7d7d,#8f8f8f 15%,#989898 70%,#8a8a8a);border:2px solid #6f6f6f;border-right:none;border-radius:0 0 0 9px;"></div>
<svg class="a" style="left:468px;top:264px" width="24" height="24"><circle cx="12" cy="12" r="12" fill="#5e5e5e"/><path d="M7.5,7.5 L16.5,16.5 M16.5,7.5 L7.5,16.5" stroke="#8e8e8e" stroke-width="3"/></svg>
<div class="a" style="left:541px;top:261.0px;white-space:pre;font-size:26px;line-height:29.04px;letter-spacing:0.96px;color:#fff;text-shadow:0 1px 0 #555;">ex_floquet_quasienergies.py</div>
<div class="a " style="left:924px;top:254px;width:337px;height:42px;background:linear-gradient(#fff,#f6f6f6);border:2px solid #9a9a9a;border-left:none;border-top:none;border-radius:0 0 9px 0;"></div>
<svg class="a" style="left:948px;top:264px" width="24" height="24"><circle cx="12" cy="12" r="12" fill="#404040"/><path d="M7.5,7.5 L16.5,16.5 M16.5,7.5 L7.5,16.5" stroke="#bdbdbd" stroke-width="3"/></svg>
<svg class="a" style="left:980px;top:261px" width="32" height="32"><path d="M3,1 H22 L29,8 V31 H3Z" fill="#f4f4f4" stroke="#aaa" stroke-width="1.5"/><path d="M14,7 C9,7 9,9 9,11 V14 H16 V15 H7 C4,15 3,18 3,21 C3,24 5,26 7,26 H9 V22 C9,20 11,19 13,19 H18 C20,19 21,18 21,16 V11 C21,9 19,7 16,7Z" fill="#3b73b0"/><path d="M16,31 C21,31 21,29 21,27 V24 H14 V23 H23 C26,23 27,20 27,17 C27,14 25,12 23,12 H21 V16 C21,18 19,19 17,19 H12 C10,19 9,20 9,22 V27 C9,29 11,31 14,31Z" fill="#f7d23a"/></svg>
<div class="a" style="left:1021px;top:261.0px;white-space:pre;font-size:26px;line-height:29.04px;letter-spacing:1.2px;color:#000;">ex_propagator.py</div>
<div class="a " style="left:120px;top:306px;width:1474px;height:1344px;background:#fff;border:2px solid #a0a0a0;border-bottom-color:#a4a4a4;"></div>
<div class="a " style="left:116px;top:1650px;width:1482px;height:5px;background:#dcdcdc;"></div>
<div class="a " style="left:122px;top:308px;width:80px;height:1310px;background:#efefef;"></div>
<div class="a " style="left:210px;top:627px;width:1326px;height:32px;background:#fbedfb;"></div>
<div class="a " style="left:1346px;top:308px;width:2px;height:1310px;background:#a8a8a8;"></div>
<div class="a " style="left:1536px;top:308px;width:24px;height:1310px;background:#eeeeee;"></div>
<div class="a " style="left:1538px;top:802px;width:22px;height:424px;background:#f7f7f7;border:2px solid #fff;border-right:none;"></div>
<div class="a " style="left:1540px;top:360px;width:18px;height:6px;background:#ffaa00;border:2px solid #d28800;"></div>
<div class="a " style="left:1540px;top:370px;width:18px;height:6px;background:#ffaa00;border:2px solid #d28800;"></div>
<div class="a " style="left:1560px;top:308px;width:32px;height:1310px;background:linear-gradient(90deg,#e4e4e4 0,#e4e4e4 4px,#f4f4f4 4px,#fbfbfb 50%,#f2f2f2);"></div>
<div class="a " style="left:1570px;top:806px;width:16px;height:418px;background:#c0c0c0;border-radius:8px;"></div>
<div class="a " style="left:122px;top:1618px;width:1470px;height:30px;background:linear-gradient(#e2e2e2 0,#e2e2e2 2px,#f3f3f3 2px,#fcfcfc 50%,#f2f2f2);"></div>
<div class="a " style="left:124px;top:1626px;width:1168px;height:16px;background:#c0c0c0;border-radius:8px;"></div>
<div class="a " style="left:1562px;top:1618px;width:30px;height:30px;background:#fff;border-left:2px solid #e0e0e0;"></div>
<div class="a m" style="left:122px;top:309.6px;width:79px;text-align:right;color:#7a7a7a;white-space:pre;">48<br>49<br>50<br>51<br>52<br>53<br>54<br>55<br>56<br>57<br>58<br>59<br>60<br>61<br>62<br>63<br>64<br>65<br>66<br>67<br>68<br>69<br>70<br>71<br>72<br>73<br>74<br>75<br>76<br>77<br>78<br>79<br>80<br>81<br>82<br>83<br>84<br>85<br>86<br>87<br>88</div>
<div class="a m" style="left:209px;top:309.6px;white-space:pre;">    <span style="color:#adadad;font-style:italic;">#quasi_energies = zeros((len(A_vec), 2))</span><br>    <span style="color:#adadad;font-style:italic;">#f_gnd_prob     = zeros((len(A_vec), 2))</span><br>    quasi_energies = zeros((<span style="color:#900090;">len</span>(eps0_vec), <span style="color:#800000;">2</span>))<br>    f_gnd_prob     = zeros((<span style="color:#900090;">len</span>(eps0_vec), <span style="color:#800000;">2</span>))<br>    wf_gnd_prob    = zeros((<span style="color:#900090;">len</span>(eps0_vec), <span style="color:#800000;">2</span>))<br><br>    <span style="color:#0000ff;">for</span> idx, eps0 <span style="color:#0000ff;">in</span> <span style="color:#900090;">enumerate</span>(eps0_vec):<br><br>        H0 = - delta/<span style="color:#800000;">2.0</span> * sx - eps0/<span style="color:#800000;">2.0</span> * sz<br>        H1 = A/<span style="color:#800000;">2.0</span> * sz<br><br>        <span style="color:#adadad;font-style:italic;"># H = H0 + H1 * sin(w * t) in the &#x27;list-string&#x27; format</span><br>        H = [H0, [H1, <span style="color:#00aa00;">&#x27;sin(w * t)&#x27;</span>]]<br>        Hargs = {<span style="color:#00aa00;">&#x27;w&#x27;</span>: omega}<br><br>        <span style="color:#adadad;font-style:italic;"># find the floquet modes</span><br>        f_modes,f_energies = floquet_modes(H, T, Hargs)<br><br>        <span style="color:#900090;">print</span> <span style="color:#00aa00;">&quot;Floquet quasienergies[&quot;</span>,idx,<span style="color:#00aa00;">&quot;] =&quot;</span>, f_energies<br><br>        quasi_energies[idx,:] = f_energies<br><br>        f_gnd_prob[idx, <span style="color:#800000;">0</span>] = expect(sm.dag() * sm, f_modes[<span style="color:#800000;">0</span>])<br>        f_gnd_prob[idx, <span style="color:#800000;">1</span>] = expect(sm.dag() * sm, f_modes[<span style="color:#800000;">1</span>])<br><br>        f_states = floquet_states_t(f_modes, f_energies, <span style="color:#800000;">0</span>, H, T, Hargs)<br><br>        wf_gnd_prob[idx, <span style="color:#800000;">0</span>] = expect(sm.dag() * sm, f_states[<span style="color:#800000;">0</span>])<br>        wf_gnd_prob[idx, <span style="color:#800000;">1</span>] = expect(sm.dag() * sm, f_states[<span style="color:#800000;">1</span>])<br><br>    <span style="color:#0000ff;">return</span> quasi_energies, f_gnd_prob, wf_gnd_prob<br><br><span style="color:#adadad;font-style:italic;">#</span><br><span style="color:#adadad;font-style:italic;"># set up the calculation: a strongly driven two-level system</span><br><span style="color:#adadad;font-style:italic;"># (repeated LZ transitions)</span><br><span style="color:#adadad;font-style:italic;">#</span><br>delta = <span style="color:#800000;">0.2</span> * <span style="color:#800000;">2</span> * pi  <span style="color:#adadad;font-style:italic;"># qubit sigma_x coefficient</span><br>eps0  = <span style="color:#800000;">0.5</span> * <span style="color:#800000;">2</span> * pi  <span style="color:#adadad;font-style:italic;"># qubit sigma_z coefficient</span><br>gamma1 = <span style="color:#800000;">0.0</span>        <span style="color:#adadad;font-style:italic;"># relaxation rate</span><br>gamma2 = <span style="color:#800000;">0.0</span>         <span style="color:#adadad;font-style:italic;"># dephasing  rate</span><br>A      = <span style="color:#800000;">2.0</span> * <span style="color:#800000;">2</span> * pi</div>
<div class="a hdr" style="left:1602px;top:203px;width:1392px;height:49px;"></div>
<div class="a " style="left:1602px;top:252px;width:1392px;height:2px;background:#a4a4a4;"></div>
<svg class="a" style="left:1608px;top:212px" width="28" height="28"><circle cx="14" cy="14" r="14" fill="#3e3e3e"/><circle cx="14" cy="14" r="12.5" fill="#484848"/><path d="M9,9 L19,19 M19,9 L9,19" stroke="#fff" stroke-width="4" stroke-linecap="square"/></svg>
<svg class="a" style="left:1648px;top:212px" width="28" height="28"><circle cx="14" cy="14" r="14" fill="#3e3e3e"/><circle cx="14" cy="14" r="12.5" fill="#484848"/><rect x="12" y="8" width="9" height="8" fill="none" stroke="#ddd" stroke-width="2"/><rect x="7" y="12.5" width="10" height="8" fill="#484848" stroke="#fff" stroke-width="2.4"/></svg>
<div class="a" style="left:2245px;top:215.2px;white-space:pre;font-size:23px;line-height:25.69px;letter-spacing:0.6px;color:#151515;">Variable explorer</div>
<div class="a " style="left:1598px;top:203px;width:2px;height:1452px;background:#a8a8a8;"></div>
<div class="a " style="left:1600px;top:203px;width:2px;height:1452px;background:#8a8a8a;"></div>
<div class="a " style="left:1602px;top:254px;width:2px;height:1401px;background:#c4c4c4;"></div>
<div class="a " style="left:1602px;top:254px;width:1320px;height:718px;background:#ececec;"></div>
<div class="a " style="left:1604px;top:254px;width:8px;height:716px;background:#fafafa;"></div>
<div class="a " style="left:1604px;top:302px;width:8px;height:2px;background:#b0b0b0;"></div>
<div class="a " style="left:1612px;top:254px;width:1277px;height:49px;background:linear-gradient(#ffffff,#fbfbfb 40%,#eeeeee 75%,#e6e6e6);"></div>
<div class="a " style="left:1612px;top:254px;width:297px;height:49px;background:linear-gradient(#c7e0f6,#aacff1 45%,#8bbff0 75%,#b6daf2 92%,#6ea3d4);"></div>
<div class="a " style="left:1612px;top:302px;width:1277px;height:2px;background:#b8b8b8;"></div>
<div class="a " style="left:1612px;top:302px;width:297px;height:2px;background:#6a9fd0;"></div>
<div class="a " style="left:1908px;top:254px;width:2px;height:49px;background:#9fbfdd;"></div>
<div class="a " style="left:2046px;top:262px;width:2px;height:38px;background:#d0d0d0;"></div>
<div class="a " style="left:2172px;top:262px;width:2px;height:38px;background:#d0d0d0;"></div>
<div class="a" style="left:1711px;top:267.7px;white-space:pre;font-size:22px;line-height:24.57px;letter-spacing:0.3px;color:#111;">Name</div>
<svg class="a" style="left:1874px;top:270px" width="20" height="18"><path d="M10,1 L19,17 L1,17Z" fill="#4a5a6a"/></svg>
<div class="a" style="left:1952px;top:267.7px;white-space:pre;font-size:22px;line-height:24.57px;letter-spacing:0.3px;color:#111;">Type</div>
<div class="a" style="left:2088px;top:267.7px;white-space:pre;font-size:22px;line-height:24.57px;letter-spacing:0.3px;color:#111;">Size</div>
<div class="a" style="left:2503px;top:267.7px;white-space:pre;font-size:22px;line-height:24.57px;letter-spacing:0.3px;color:#111;">Value</div>
<div class="a " style="left:1612px;top:304px;width:296px;height:58px;background:#fbfbfb;"></div>
<div class="a " style="left:1910px;top:304px;width:136px;height:58px;background:#f2f2f2;"></div>
<div class="a " style="left:2048px;top:304px;width:124px;height:58px;background:#f2f2f2;"></div>
<div class="a " style="left:2174px;top:304px;width:714px;height:58px;background:#ccccfa;"></div>
<div class="a " style="left:1604px;top:308px;width:2px;height:50px;background:#cfcfcf;"></div>
<div class="a " style="left:1610px;top:308px;width:2px;height:50px;background:#c2c2c2;"></div>
<div class="a " style="left:1604px;top:362px;width:8px;height:2px;background:#c0c0c0;"></div>
<div class="a " style="left:1612px;top:362px;width:1277px;height:2px;background:#a0a0a0;"></div>
<div class="a" style="left:1622px;top:318.5px;white-space:pre;font-size:26px;line-height:29.04px;letter-spacing:1.3px;color:#000;">A</div>
<div class="a" style="left:1920px;top:318.5px;white-space:pre;font-size:26px;line-height:29.04px;letter-spacing:1.25px;color:#000;">float</div>
<div class="a m" style="left:2058px;top:319.6px;white-space:pre;color:#000;">1</div>
<div class="a m" style="left:2182px;top:319.6px;white-space:pre;color:#000;">12.566370614359172</div>
<div class="a " style="left:1612px;top:364px;width:296px;height:58px;background:#fbfbfb;"></div>
<div class="a " style="left:1910px;top:364px;width:136px;height:58px;background:#f2f2f2;"></div>
<div class="a " style="left:2048px;top:364px;width:124px;height:58px;background:#f2f2f2;"></div>
<div class="a " style="left:2174px;top:364px;width:714px;height:58px;background:#ccccfa;"></div>
<div class="a " style="left:1604px;top:368px;width:2px;height:50px;background:#cfcfcf;"></div>
<div class="a " style="left:1610px;top:368px;width:2px;height:50px;background:#c2c2c2;"></div>
<div class="a " style="left:1604px;top:422px;width:8px;height:2px;background:#c0c0c0;"></div>
<div class="a " style="left:1612px;top:422px;width:1277px;height:2px;background:#a0a0a0;"></div>
<div class="a" style="left:1622px;top:378.5px;white-space:pre;font-size:26px;line-height:29.04px;letter-spacing:1.3px;color:#000;">T</div>
<div class="a" style="left:1920px;top:378.5px;white-space:pre;font-size:26px;line-height:29.04px;letter-spacing:1.25px;color:#000;">float</div>
<div class="a m" style="left:2058px;top:379.6px;white-space:pre;color:#000;">1</div>
<div class="a m" style="left:2182px;top:379.6px;white-space:pre;color:#000;">1.0</div>
<div class="a " style="left:1612px;top:424px;width:296px;height:58px;background:#fbfbfb;"></div>
<div class="a " style="left:1910px;top:424px;width:136px;height:58px;background:#f2f2f2;"></div>
<div class="a " style="left:2048px;top:424px;width:124px;height:58px;background:#f2f2f2;"></div>
<div class="a " style="left:2174px;top:424px;width:714px;height:58px;background:#ccccfa;"></div>
<div class="a " style="left:1604px;top:428px;width:2px;height:50px;background:#cfcfcf;"></div>
<div class="a " style="left:1610px;top:428px;width:2px;height:50px;background:#c2c2c2;"></div>
<div class="a " style="left:1604px;top:482px;width:8px;height:2px;background:#c0c0c0;"></div>
<div class="a " style="left:1612px;top:482px;width:1277px;height:2px;background:#a0a0a0;"></div>
<div class="a" style="left:1622px;top:438.5px;white-space:pre;font-size:26px;line-height:29.04px;letter-spacing:1.3px;color:#000;">delta</div>
<div class="a" style="left:1920px;top:438.5px;white-space:pre;font-size:26px;line-height:29.04px;letter-spacing:1.25px;color:#000;">float</div>
<div class="a m" style="left:2058px;top:439.6px;white-space:pre;color:#000;">1</div>
<div class="a m" style="left:2182px;top:439.6px;white-space:pre;color:#000;">1.2566370614359172</div>
<div class="a " style="left:1612px;top:484px;width:296px;height:58px;background:#fbfbfb;"></div>
<div class="a " style="left:1910px;top:484px;width:136px;height:58px;background:#f2f2f2;"></div>
<div class="a " style="left:2048px;top:484px;width:124px;height:58px;background:#f2f2f2;"></div>
<div class="a " style="left:2174px;top:484px;width:714px;height:58px;background:#ccccfa;"></div>
<div class="a " style="left:1604px;top:488px;width:2px;height:50px;background:#cfcfcf;"></div>
<div class="a " style="left:1610px;top:488px;width:2px;height:50px;background:#c2c2c2;"></div>
<div class="a " style="left:1604px;top:542px;width:8px;height:2px;background:#c0c0c0;"></div>
<div class="a " style="left:1612px;top:542px;width:1277px;height:2px;background:#a0a0a0;"></div>
<div class="a" style="left:1622px;top:498.5px;white-space:pre;font-size:26px;line-height:29.04px;letter-spacing:1.3px;color:#000;">e</div>
<div class="a" style="left:1920px;top:498.5px;white-space:pre;font-size:26px;line-height:29.04px;letter-spacing:1.25px;color:#000;">float</div>
<div class="a m" style="left:2058px;top:499.6px;white-space:pre;color:#000;">1</div>
<div class="a m" style="left:2182px;top:499.6px;white-space:pre;color:#000;">2.718281828459045</div>
<div class="a " style="left:1612px;top:544px;width:296px;height:58px;background:#fbfbfb;"></div>
<div class="a " style="left:1910px;top:544px;width:136px;height:58px;background:#f2f2f2;"></div>
<div class="a " style="left:2048px;top:544px;width:124px;height:58px;background:#f2f2f2;"></div>
<div class="a " style="left:2174px;top:544px;width:714px;height:58px;background:#ccccfa;"></div>
<div class="a " style="left:1604px;top:548px;width:2px;height:50px;background:#cfcfcf;"></div>
<div class="a " style="left:1610px;top:548px;width:2px;height:50px;background:#c2c2c2;"></div>
<div class="a " style="left:1604px;top:602px;width:8px;height:2px;background:#c0c0c0;"></div>
<div class="a " style="left:1612px;top:602px;width:1277px;height:2px;background:#a0a0a0;"></div>
<div class="a" style="left:1622px;top:558.5px;white-space:pre;font-size:26px;line-height:29.04px;letter-spacing:1.3px;color:#000;">eps0</div>
<div class="a" style="left:1920px;top:558.5px;white-space:pre;font-size:26px;line-height:29.04px;letter-spacing:1.25px;color:#000;">float</div>
<div class="a m" style="left:2058px;top:559.6px;white-space:pre;color:#000;">1</div>
<div class="a m" style="left:2182px;top:559.6px;white-space:pre;color:#000;">3.141592653589793</div>
<div class="a " style="left:1612px;top:604px;width:296px;height:58px;background:#fbfbfb;"></div>
<div class="a " style="left:1910px;top:604px;width:136px;height:58px;background:#f2f2f2;"></div>
<div class="a " style="left:2048px;top:604px;width:124px;height:58px;background:#f2f2f2;"></div>
<div class="a " style="left:2174px;top:604px;width:714px;height:58px;background:#ccccfa;"></div>
<div class="a " style="left:1604px;top:608px;width:2px;height:50px;background:#cfcfcf;"></div>
<div class="a " style="left:1610px;top:608px;width:2px;height:50px;background:#c2c2c2;"></div>
<div class="a " style="left:1604px;top:662px;width:8px;height:2px;background:#c0c0c0;"></div>
<div class="a " style="left:1612px;top:662px;width:1277px;height:2px;background:#a0a0a0;"></div>
<div class="a" style="left:1622px;top:618.5px;white-space:pre;font-size:26px;line-height:29.04px;letter-spacing:1.3px;color:#000;">gamma1</div>
<div class="a" style="left:1920px;top:618.5px;white-space:pre;font-size:26px;line-height:29.04px;letter-spacing:1.25px;color:#000;">float</div>
<div class="a m" style="left:2058px;top:619.6px;white-space:pre;color:#000;">1</div>
<div class="a m" style="left:2182px;top:619.6px;white-space:pre;color:#000;">0.0</div>
<div class="a " style="left:1612px;top:664px;width:296px;height:58px;background:#fbfbfb;"></div>
<div class="a " style="left:1910px;top:664px;width:136px;height:58px;background:#f2f2f2;"></div>
<div class="a " style="left:2048px;top:664px;width:124px;height:58px;background:#f2f2f2;"></div>
<div class="a " style="left:2174px;top:664px;width:714px;height:58px;background:#ccccfa;"></div>
<div class="a " style="left:1604px;top:668px;width:2px;height:50px;background:#cfcfcf;"></div>
<div class="a " style="left:1610px;top:668px;width:2px;height:50px;background:#c2c2c2;"></div>
<div class="a " style="left:1604px;top:722px;width:8px;height:2px;background:#c0c0c0;"></div>
<div class="a " style="left:1612px;top:722px;width:1277px;height:2px;background:#a0a0a0;"></div>
<div class="a" style="left:1622px;top:678.5px;white-space:pre;font-size:26px;line-height:29.04px;letter-spacing:1.3px;color:#000;">gamma2</div>
<div class="a" style="left:1920px;top:678.5px;white-space:pre;font-size:26px;line-height:29.04px;letter-spacing:1.25px;color:#000;">float</div>
<div class="a m" style="left:2058px;top:679.6px;white-space:pre;color:#000;">1</div>
<div class="a m" style="left:2182px;top:679.6px;white-space:pre;color:#000;">0.0</div>
<div class="a " style="left:1612px;top:724px;width:296px;height:58px;background:#fbfbfb;"></div>
<div class="a " style="left:1910px;top:724px;width:136px;height:58px;background:#f2f2f2;"></div>
<div class="a " style="left:2048px;top:724px;width:124px;height:58px;background:#f2f2f2;"></div>
<div class="a " style="left:2174px;top:724px;width:714px;height:58px;background:#e8cccc;"></div>
<div class="a " style="left:1604px;top:728px;width:2px;height:50px;background:#cfcfcf;"></div>
<div class="a " style="left:1610px;top:728px;width:2px;height:50px;background:#c2c2c2;"></div>
<div class="a " style="left:1604px;top:782px;width:8px;height:2px;background:#c0c0c0;"></div>
<div class="a " style="left:1612px;top:782px;width:1277px;height:2px;background:#a0a0a0;"></div>
<div class="a" style="left:1622px;top:738.5px;white-space:pre;font-size:26px;line-height:29.04px;letter-spacing:1.3px;color:#000;">numpy_requirement</div>
<div class="a" style="left:1920px;top:738.5px;white-space:pre;font-size:26px;line-height:29.04px;letter-spacing:1.25px;color:#000;">str</div>
<div class="a m" style="left:2058px;top:739.6px;white-space:pre;color:#000;">1</div>
<div class="a m" style="left:2182px;top:739.6px;white-space:pre;color:#000;">1.6.0</div>
<div class="a " style="left:1612px;top:784px;width:296px;height:58px;background:#fbfbfb;"></div>
<div class="a " style="left:1910px;top:784px;width:136px;height:58px;background:#f2f2f2;"></div>
<div class="a " style="left:2048px;top:784px;width:124px;height:58px;background:#f2f2f2;"></div>
<div class="a " style="left:2174px;top:784px;width:714px;height:58px;background:#ccccfa;"></div>
<div class="a " style="left:1604px;top:788px;width:2px;height:50px;background:#cfcfcf;"></div>
<div class="a " style="left:1610px;top:788px;width:2px;height:50px;background:#c2c2c2;"></div>
<div class="a " style="left:1604px;top:842px;width:8px;height:2px;background:#c0c0c0;"></div>
<div class="a " style="left:1612px;top:842px;width:1277px;height:2px;background:#a0a0a0;"></div>
<div class="a" style="left:1622px;top:798.5px;white-space:pre;font-size:26px;line-height:29.04px;letter-spacing:1.3px;color:#000;">omega</div>
<div class="a" style="left:1920px;top:798.5px;white-space:pre;font-size:26px;line-height:29.04px;letter-spacing:1.25px;color:#000;">float</div>
<div class="a m" style="left:2058px;top:799.6px;white-space:pre;color:#000;">1</div>
<div class="a m" style="left:2182px;top:799.6px;white-space:pre;color:#000;">6.283185307179586</div>
<div class="a " style="left:1612px;top:844px;width:296px;height:58px;background:#fbfbfb;"></div>
<div class="a " style="left:1910px;top:844px;width:136px;height:58px;background:#f2f2f2;"></div>
<div class="a " style="left:2048px;top:844px;width:124px;height:58px;background:#f2f2f2;"></div>
<div class="a " style="left:2174px;top:844px;width:714px;height:58px;background:#ccccfa;"></div>
<div class="a " style="left:1604px;top:848px;width:2px;height:50px;background:#cfcfcf;"></div>
<div class="a " style="left:1610px;top:848px;width:2px;height:50px;background:#c2c2c2;"></div>
<div class="a " style="left:1604px;top:902px;width:8px;height:2px;background:#c0c0c0;"></div>
<div class="a " style="left:1612px;top:902px;width:1277px;height:2px;background:#a0a0a0;"></div>
<div class="a" style="left:1622px;top:858.5px;white-space:pre;font-size:26px;line-height:29.04px;letter-spacing:1.3px;color:#000;">pi</div>
<div class="a" style="left:1920px;top:858.5px;white-space:pre;font-size:26px;line-height:29.04px;letter-spacing:1.25px;color:#000;">float</div>
<div class="a m" style="left:2058px;top:859.6px;white-space:pre;color:#000;">1</div>
<div class="a m" style="left:2182px;top:859.6px;white-space:pre;color:#000;">3.141592653589793</div>
<div class="a " style="left:1612px;top:904px;width:296px;height:58px;background:#fbfbfb;"></div>
<div class="a " style="left:1910px;top:904px;width:136px;height:58px;background:#f2f2f2;"></div>
<div class="a " style="left:2048px;top:904px;width:124px;height:58px;background:#f2f2f2;"></div>
<div class="a " style="left:2174px;top:904px;width:714px;height:58px;background:#e8cccc;"></div>
<div class="a " style="left:1604px;top:908px;width:2px;height:50px;background:#cfcfcf;"></div>
<div class="a " style="left:1610px;top:908px;width:2px;height:50px;background:#c2c2c2;"></div>
<div class="a " style="left:1604px;top:962px;width:8px;height:2px;background:#c0c0c0;"></div>
<div class="a " style="left:1612px;top:962px;width:1277px;height:2px;background:#a0a0a0;"></div>
<div class="a" style="left:1622px;top:918.5px;white-space:pre;font-size:26px;line-height:29.04px;letter-spacing:1.3px;color:#000;">qutip_rc_file</div>
<div class="a" style="left:1920px;top:918.5px;white-space:pre;font-size:26px;line-height:29.04px;letter-spacing:1.25px;color:#000;">str</div>
<div class="a m" style="left:2058px;top:919.6px;white-space:pre;color:#000;">1</div>
<div class="a m" style="left:2182px;top:919.6px;white-space:pre;color:#000;">/Users/rob/.qutiprc</div>
<div class="a " style="left:1612px;top:964px;width:296px;height:6px;background:#fbfbfb;"></div>
<div class="a " style="left:1910px;top:964px;width:136px;height:6px;background:#f2f2f2;"></div>
<div class="a " style="left:2048px;top:964px;width:124px;height:6px;background:#f2f2f2;"></div>
<div class="a " style="left:2174px;top:964px;width:714px;height:6px;background:#ccccfa;"></div>
<div class="a " style="left:1604px;top:968px;width:2px;height:2px;background:#cfcfcf;"></div>
<div class="a " style="left:1610px;top:968px;width:2px;height:2px;background:#c2c2c2;"></div>
<div class="a " style="left:1908px;top:304px;width:2px;height:666px;background:#a0a0a0;"></div>
<div class="a " style="left:2046px;top:304px;width:2px;height:666px;background:#a0a0a0;"></div>
<div class="a " style="left:2172px;top:304px;width:2px;height:666px;background:#a0a0a0;"></div>
<div class="a " style="left:1602px;top:970px;width:1320px;height:2px;background:#a8a8a8;"></div>
<div class="a " style="left:2888px;top:304px;width:2px;height:666px;background:#a0a0a0;"></div>
<div class="a " style="left:2890px;top:254px;width:30px;height:716px;background:linear-gradient(90deg,#ededed,#fafafa 40%,#f4f4f4);"></div>
<div class="a " style="left:2898px;top:260px;width:16px;height:483px;background:#c0c0c0;border-radius:8px;"></div>
<div class="a " style="left:2920px;top:254px;width:2px;height:716px;background:#a8a8a8;"></div>
<div class="a " style="left:2922px;top:254px;width:72px;height:718px;background:#ececec;"></div>
<div class="a " style="left:2942px;top:255px;width:52px;height:50px;background:linear-gradient(#ffffff,#f4f4f4);border:2px solid #999;border-right:none;"></div>
<div class="a " style="left:2942px;top:323px;width:52px;height:50px;background:linear-gradient(#707070,#8e8e8e 12%,#aeaeae 55%,#c6c6c6);border:2px solid #6a6a6a;border-right:none;"></div>
<div class="a " style="left:2942px;top:391px;width:52px;height:50px;background:linear-gradient(#ffffff,#f4f4f4);border:2px solid #999;border-right:none;"></div>
<div class="a " style="left:2942px;top:459px;width:52px;height:50px;background:linear-gradient(#ffffff,#f4f4f4);border:2px solid #999;border-right:none;"></div>
<div class="a " style="left:2942px;top:527px;width:52px;height:50px;background:linear-gradient(#ffffff,#f4f4f4);border:2px solid #999;border-right:none;"></div>
<div class="a " style="left:2942px;top:595px;width:52px;height:50px;background:linear-gradient(#ffffff,#f4f4f4);border:2px solid #999;border-right:none;"></div>
<svg class="a" style="left:2952px;top:260px" width="34" height="34"><path d="M4,14 C4,8 8,6 14,6 H24 V1 L33,9 L24,17 V12 H14 C11,12 10,13 10,15Z" fill="#f08020" stroke="#b05010" stroke-width="1"/><path d="M30,20 C30,26 26,28 20,28 H10 V33 L1,25 L10,17 V22 H20 C23,22 24,21 24,19Z" fill="#40b030" stroke="#207020" stroke-width="1"/></svg>
<svg class="a" style="left:2952px;top:328px" width="34" height="34"><path d="M4,14 C4,8 8,6 14,6 H24 V1 L33,9 L24,17 V12 H14 C11,12 10,13 10,15Z" fill="#f08020"/><path d="M30,20 C30,26 26,28 20,28 H10 V33 L1,25 L10,17 V22 H20 C23,22 24,21 24,19Z" fill="#40b030"/><circle cx="17" cy="17" r="10" fill="#fff" stroke="#2050c0" stroke-width="2.5"/><path d="M17,10 V17 L20,12" stroke="#d02020" stroke-width="2" fill="none"/></svg>
<svg class="a" style="left:2952px;top:396px" width="34" height="34"><rect x="7" y="2" width="20" height="30" fill="#f4f4f4" stroke="#ddd"/><path d="M12,3 H22 V17 H30 L17,31 L4,17 H12Z" fill="#3cb030" stroke="#208020" stroke-width="1"/></svg>
<svg class="a" style="left:2952px;top:464px" width="34" height="34"><path d="M3,3 H29 L31,5 V31 H3Z" fill="#b8b8b8"/><rect x="8" y="4" width="17" height="11" fill="#ececec"/><rect x="9" y="21" width="15" height="10" fill="#e0e0e0"/><rect x="12" y="23" width="4" height="7" fill="#9a9a9a"/></svg>
<svg class="a" style="left:2952px;top:532px" width="34" height="34"><path d="M3,3 H29 L31,5 V31 H3Z" fill="#1e1e1e"/><rect x="8" y="4" width="17" height="11" fill="#e8e8e8"/><rect x="9" y="21" width="15" height="10" fill="#b0b0b0"/><path d="M2,33 L20,16 L23,19 L5,34Z" fill="#888" stroke="#555" stroke-width="1"/></svg>
<svg class="a" style="left:2950px;top:602px" width="40" height="32"><rect x="2" y="2" width="30" height="28" fill="#fff" stroke="#9cb0c4" stroke-width="2.5"/><rect x="3" y="3" width="28" height="5" fill="#c9d6e2"/><rect x="7" y="12" width="5" height="5" fill="#3a9a3a"/><rect x="7" y="21" width="5" height="5" fill="#3a9a3a"/><rect x="14" y="13.5" width="13" height="2.5" fill="#333"/><rect x="14" y="22.5" width="13" height="2.5" fill="#333"/><path d="M34,19 L38,19 L36,22Z" fill="#333"/></svg>
<div class="a " style="left:1602px;top:972px;width:1392px;height:42px;background:#ececec;"></div>
<div class="a " style="left:1604px;top:972px;width:336px;height:22px;background:#e4e4e4;border-bottom:2px solid #dadada;border-radius:0 0 0 10px;"></div>
<div class="a " style="left:2656px;top:972px;width:336px;height:22px;background:#e4e4e4;border-bottom:2px solid #dadada;border-radius:0 0 10px 0;"></div>
<div class="a " style="left:1938px;top:972px;width:250px;height:42px;background:linear-gradient(#fff,#f4f4f4);border:2px solid #a8a8a8;border-top:none;border-right:none;border-radius:0 0 0 10px;"></div>
<div class="a" style="left:1959px;top:978.5px;white-space:pre;font-size:26px;line-height:29.04px;letter-spacing:1.1px;color:#000;">Object inspector</div>
<div class="a " style="left:2188px;top:972px;width:267px;height:42px;background:linear-gradient(#8a8a8a,#9a9a9a 60%,#8c8c8c);border-bottom:2px solid #6e6e6e;"></div>
<div class="a" style="left:2214px;top:978.5px;white-space:pre;font-size:26px;line-height:29.04px;letter-spacing:1.2px;color:#fff;text-shadow:0 1px 0 #555;">Variable explorer</div>
<div class="a " style="left:2455px;top:972px;width:201px;height:42px;background:linear-gradient(#fff,#f4f4f4);border:2px solid #a8a8a8;border-top:none;border-left:none;border-radius:0 0 10px 0;"></div>
<div class="a" style="left:2480px;top:978.5px;white-space:pre;font-size:26px;line-height:29.04px;letter-spacing:1.05px;color:#000;">File explorer</div>
<div class="a " style="left:1602px;top:1014px;width:1392px;height:2px;background:#a8a8a8;"></div>
<div class="a hdr" style="left:1602px;top:1016px;width:1392px;height:50px;"></div>
<div class="a " style="left:1602px;top:1066px;width:1392px;height:2px;background:#a4a4a4;"></div>
<svg class="a" style="left:1608px;top:1026px" width="28" height="28"><circle cx="14" cy="14" r="14" fill="#3e3e3e"/><circle cx="14" cy="14" r="12.5" fill="#484848"/><path d="M9,9 L19,19 M19,9 L9,19" stroke="#fff" stroke-width="4" stroke-linecap="square"/></svg>
<svg class="a" style="left:1648px;top:1026px" width="28" height="28"><circle cx="14" cy="14" r="14" fill="#3e3e3e"/><circle cx="14" cy="14" r="12.5" fill="#484848"/><rect x="12" y="8" width="9" height="8" fill="none" stroke="#ddd" stroke-width="2"/><rect x="7" y="12.5" width="10" height="8" fill="#484848" stroke="#fff" stroke-width="2.4"/></svg>
<div class="a" style="left:2294px;top:1029.9px;white-space:pre;font-size:23px;line-height:25.69px;letter-spacing:0.1px;color:#151515;">Console</div>
<div class="a " style="left:1602px;top:1068px;width:1392px;height:20px;background:#eeeeee;"></div>
<div class="a " style="left:1654px;top:1088px;width:1340px;height:2px;background:#a9a9a9;"></div>
<div class="a " style="left:1654px;top:1090px;width:1340px;height:2px;background:#cbcbcb;"></div>
<div class="a " style="left:1602px;top:1092px;width:1392px;height:28px;background:#e4e4e4;"></div>
<div class="a " style="left:1602px;top:1068px;width:53px;height:42px;background:linear-gradient(#fff 0,#fff 4px,#e6e6e6 6px,#f6f6f6 90%,#fafafa);border:2px solid #8e8e8e;"></div>
<svg class="a" style="left:1602px;top:1068px" width="52" height="42"><rect x="15" y="8" width="24" height="6" fill="#fff" stroke="#5e5e5e" stroke-width="2"/><rect x="18" y="12" width="18" height="3" fill="#cfd0d2"/><path d="M11,30 V17 H16 M38,17 H43 V30" fill="none" stroke="#8a8a8a" stroke-width="2"/><rect x="16" y="20" width="22" height="12" fill="#f4f4f4" stroke="#dcdcdc" stroke-width="2"/><path d="M44,25 H48 L45,29Z" fill="#333"/></svg>
<div class="a " style="left:1834px;top:1068px;width:227px;height:42px;background:linear-gradient(#7d7d7d,#8f8f8f 15%,#989898 70%,#8a8a8a);border:2px solid #6f6f6f;border-right:none;border-radius:0 0 0 9px;"></div>
<svg class="a" style="left:1854px;top:1078px" width="24" height="24"><circle cx="12" cy="12" r="12" fill="#7a7a7a"/><path d="M7.5,7.5 L16.5,16.5 M16.5,7.5 L7.5,16.5" stroke="#a8a8a8" stroke-width="3"/></svg>
<div class="a" style="left:1927px;top:1075.2px;white-space:pre;font-size:26px;line-height:29.04px;letter-spacing:0.86px;color:#fff;text-shadow:0 1px 0 #555;">Python 1</div>
<div class="a " style="left:2061px;top:1068px;width:476px;height:42px;background:linear-gradient(#fff,#f6f6f6);border:2px solid #9a9a9a;border-left:none;border-top:none;border-radius:0 0 9px 0;"></div>
<svg class="a" style="left:2085px;top:1078px" width="24" height="24"><circle cx="12" cy="12" r="12" fill="#404040"/><path d="M7.5,7.5 L16.5,16.5 M16.5,7.5 L7.5,16.5" stroke="#bdbdbd" stroke-width="3"/></svg>
<svg class="a" style="left:2118px;top:1074px" width="32" height="32"><circle cx="16" cy="16" r="14" fill="#bfe6b0" stroke="#9bd08a" stroke-width="1"/><path d="M16,6 V16 L23,22 M16,16 L9,23" stroke="#3a9a3a" stroke-width="2.5" fill="none"/></svg>
<div class="a" style="left:2160px;top:1075.2px;white-space:pre;font-size:26px;line-height:29.04px;letter-spacing:0.96px;color:#000;">ex_floquet_quasienergies.py</div>
<div class="a" style="left:2722px;top:1074.3px;white-space:pre;font-family:Liberation Mono,monospace;font-size:24px;line-height:32px;font-weight:bold;color:#b4685a;">00:34:13</div>
<div class="a " style="left:2864px;top:1068px;width:52px;height:42px;background:linear-gradient(#fff 0,#fff 3px,#e8e8e8 5px,#f6f6f6 80%,#fafafa);border:2px solid #8e8e8e;"></div>
<svg class="a" style="left:2874px;top:1074px" width="38" height="31"><rect x="1" y="1" width="30" height="28" fill="#fff" stroke="#a4b6c8" stroke-width="2.5"/><rect x="2" y="2" width="28" height="6" fill="#c9d8e6"/><rect x="2" y="25" width="28" height="3" fill="#c0ccd8"/><rect x="6" y="11" width="6" height="6" fill="#2e9a2e"/><rect x="6" y="19" width="6" height="6" fill="#2e9a2e"/><rect x="14" y="13" width="12" height="2.5" fill="#333"/><rect x="14" y="21" width="12" height="2.5" fill="#333"/><path d="M33,17 L37,17 L35,20Z" fill="#222"/></svg>
<div class="a " style="left:2932px;top:1068px;width:52px;height:42px;background:linear-gradient(#fff 0,#fff 3px,#e8e8e8 5px,#f6f6f6 80%,#fafafa);border:2px solid #8e8e8e;"></div>
<svg class="a" style="left:2939px;top:1072px" width="38" height="34"><path d="M19,2 L36,31 H2Z" fill="#f59a10" stroke="#e07800" stroke-width="1.5" stroke-linejoin="round"/><path d="M19,3 L33,28 H5Z" fill="url(#wg)"/><defs><linearGradient id="wg" x1="0" y1="0" x2="0" y2="1"><stop offset="0" stop-color="#ffd070"/><stop offset="1" stop-color="#f08800"/></linearGradient></defs><rect x="17" y="11" width="4" height="10" fill="#fff"/><rect x="17" y="23" width="4" height="4" fill="#fff"/></svg>
<div class="a " style="left:1608px;top:1120px;width:1380px;height:488px;background:#fff;border:2px solid #a0a0a0;"></div>
<div class="a " style="left:2956px;top:1122px;width:30px;height:484px;background:linear-gradient(90deg,#e6e6e6 0,#e6e6e6 2px,#f4f4f4 2px,#fcfcfc 50%,#f2f2f2);"></div>
<div class="a " style="left:2964px;top:1564px;width:16px;height:38px;background:#c0c0c0;border-radius:8px;"></div>
<div class="a m" style="left:1617.5px;top:1125.6px;white-space:pre;">&gt;&gt;&gt; eps0  = 0.5 * 2 * pi  # qubit sigma_z coefficient<br>&gt;&gt;&gt; gamma1 = 0.0        # relaxation rate<br>&gt;&gt;&gt; gamma2 = 0.0         # dephasing  rate<br>&gt;&gt;&gt; A      = 2.0 * 2 * pi<br>&gt;&gt;&gt; psi0   = basis(2,0)    # initial state<br>&gt;&gt;&gt; omega  = 1.0 * 2 * pi # driving frequency<br>&gt;&gt;&gt; T      = (2*pi)/omega  # driving period<br>&gt;&gt;&gt; <br>&gt;&gt;&gt; H0 = - delta/2.0 * sx - eps0/2.0 * sz<br>&gt;&gt;&gt; H0<br>Quantum object: dims = [[2], [2]], shape = [2, 2], type = oper, isherm = True<br>Qobj data =<br>[[-1.57079633 -0.62831853]<br> [-0.62831853  1.57079633]]<br>&gt;&gt;&gt; </div>
<div class="a " style="left:1676px;top:1574px;width:4px;height:30px;background:#777;"></div>
<div class="a " style="left:1602px;top:1608px;width:1392px;height:47px;background:#ececec;"></div>
<div class="a " style="left:1604px;top:1608px;width:532px;height:26px;background:#e4e4e4;border-bottom:2px solid #dadada;border-radius:0 0 0 10px;"></div>
<div class="a " style="left:2462px;top:1608px;width:530px;height:26px;background:#e4e4e4;border-bottom:2px solid #dadada;border-radius:0 0 10px 0;"></div>
<div class="a " style="left:2134px;top:1612px;width:145px;height:43px;background:linear-gradient(#8a8a8a,#9a9a9a 60%,#8c8c8c);border:2px solid #6e6e6e;border-top:none;border-right:none;border-radius:0 0 0 10px;"></div>
<div class="a" style="left:2154px;top:1620.7px;white-space:pre;font-size:26px;line-height:29.04px;letter-spacing:0.7px;color:#fff;text-shadow:0 1px 0 #555;">Console</div>
<div class="a " style="left:2279px;top:1612px;width:183px;height:43px;background:linear-gradient(#fff,#f4f4f4);border:2px solid #a8a8a8;border-top:none;border-left:none;border-radius:0 0 10px 0;"></div>
<div class="a" style="left:2305px;top:1620.7px;white-space:pre;font-size:26px;line-height:29.04px;letter-spacing:1.1px;color:#000;">History log</div>
<div class="a" style="left:1595px;top:1664.5px;white-space:pre;font-size:26px;line-height:29.04px;letter-spacing:0.6px;color:#111;">Permissions:</div>
<div class="a" style="left:1770px;top:1665.3px;white-space:pre;font-family:Liberation Mono,monospace;font-size:26px;line-height:29.5px;color:#111;">RW</div>
<div class="a" style="left:1871px;top:1664.5px;white-space:pre;font-size:26px;line-height:29.04px;letter-spacing:1.5px;color:#111;">End-of-lines:</div>
<div class="a" style="left:2057px;top:1665.3px;white-space:pre;font-family:Liberation Mono,monospace;font-size:26px;line-height:29.5px;color:#111;">LF</div>
<div class="a" style="left:2141px;top:1664.5px;white-space:pre;font-size:26px;line-height:29.04px;letter-spacing:0.5px;color:#111;">Encoding:</div>
<div class="a" style="left:2281px;top:1665.3px;white-space:pre;font-family:Liberation Mono,monospace;font-size:26px;line-height:29.5px;color:#111;">UTF-8-GUESSED</div>
<div class="a" style="left:2567px;top:1664.5px;white-space:pre;font-size:26px;line-height:29.04px;letter-spacing:0.6px;color:#111;">Line:</div>
<div class="a" style="left:2645px;top:1665.3px;white-space:pre;font-family:Liberation Mono,monospace;font-size:26px;line-height:29.5px;color:#111;">58</div>
<div class="a" style="left:2754px;top:1664.5px;white-space:pre;font-size:26px;line-height:29.04px;letter-spacing:1.0px;color:#111;">Column:</div>
<div class="a" style="left:2877px;top:1665.3px;white-space:pre;font-family:Liberation Mono,monospace;font-size:26px;line-height:29.5px;color:#111;">8</div>
<svg class="a" style="left:2968px;top:1676px" width="24" height="24"><path d="M22,4 L4,22 M22,11 L11,22 M22,18 L18,22" stroke="#888" stroke-width="2"/></svg>
</body></html>
